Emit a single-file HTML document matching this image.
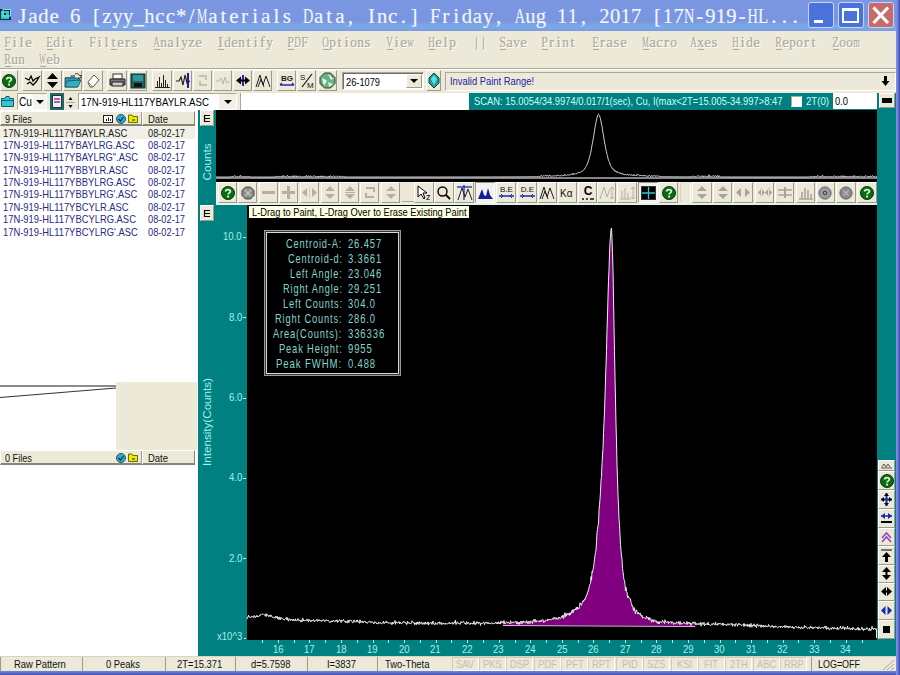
<!DOCTYPE html><html><head><meta charset="utf-8"><style>
*{margin:0;padding:0;box-sizing:border-box}
html,body{width:900px;height:675px;overflow:hidden;background:#ece9d8;font-family:'Liberation Sans',sans-serif;font-size:11px;color:#000;position:relative}
div{position:absolute}
.b{background:#ece9d8;border-style:solid;border-width:1px;border-color:#fff #9d9a8a #9d9a8a #fff}
.bp{background:#f4f3ee;border-style:solid;border-width:1px;border-color:#9d9a8a #fff #fff #9d9a8a}
.sk{border-style:solid;border-width:1px;border-color:#aca899 #fff #fff #aca899}
svg{position:absolute;overflow:visible}
</style></head><body>
<div style="position:absolute;left:0px;top:0px;width:896px;height:31px;background:linear-gradient(#7c98e2 0%,#7a95df 68%,#7aa6e4 80%,#7ba8e6 90%,#7f98e0 100%)"></div>
<div style="position:absolute;left:896px;top:0px;width:4px;height:675px;background:linear-gradient(90deg,#74a2e4 0%,#6878d8 45%,#5a5ccc 75%,#3a3aa0 100%)"></div>
<div style="position:absolute;left:0px;top:671px;width:896px;height:4px;background:linear-gradient(#6c86dc,#5668c8 60%,#4652b0)"></div>
<div style="position:absolute;left:0px;top:31px;width:896px;height:37px;background:#ece9d8"></div>
<div style="position:absolute;left:0px;top:68px;width:896px;height:1px;background:#aca899"></div>
<div style="position:absolute;left:0px;top:69px;width:896px;height:1px;background:#fff"></div>
<svg style="left:0;top:8px" width="13" height="13" viewBox="0 0 13 13"><rect x="0" y="1" width="11" height="11" fill="#0a3040"/><rect x="1" y="3" width="8" height="8" fill="#30c8c8"/><rect x="3" y="1.5" width="7.5" height="6.5" fill="none" stroke="#70e8e8" stroke-width="1"/><rect x="4" y="5" width="2" height="2" fill="#0a3040"/></svg>
<svg style="left:7.00px;top:2.00px" width="803" height="32" font-family="Liberation Serif,serif" font-size="21" font-weight="normal" stroke="#f4f6ff" stroke-width="0.15"><text x="15.29" y="21.00" text-anchor="middle" fill="#f4f6ff">J</text><text x="25.88" y="21.00" text-anchor="middle" fill="#f4f6ff">a</text><text x="31.31" y="21.00" textLength="10.30" lengthAdjust="spacingAndGlyphs" fill="#f4f6ff">d</text><text x="47.05" y="21.00" text-anchor="middle" fill="#f4f6ff">e</text><text x="63.07" y="21.00" textLength="10.30" lengthAdjust="spacingAndGlyphs" fill="#f4f6ff">6</text><text x="89.39" y="21.00" text-anchor="middle" fill="#f4f6ff">[</text><text x="99.97" y="21.00" text-anchor="middle" fill="#f4f6ff">z</text><text x="105.41" y="21.00" textLength="10.30" lengthAdjust="spacingAndGlyphs" fill="#f4f6ff">y</text><text x="115.99" y="21.00" textLength="10.30" lengthAdjust="spacingAndGlyphs" fill="#f4f6ff">y</text><text x="126.58" y="21.00" textLength="10.30" lengthAdjust="spacingAndGlyphs" fill="#f4f6ff">_</text><text x="137.16" y="21.00" textLength="10.30" lengthAdjust="spacingAndGlyphs" fill="#f4f6ff">h</text><text x="152.90" y="21.00" text-anchor="middle" fill="#f4f6ff">c</text><text x="163.48" y="21.00" text-anchor="middle" fill="#f4f6ff">c</text><text x="168.92" y="21.00" textLength="10.30" lengthAdjust="spacingAndGlyphs" fill="#f4f6ff">*</text><text x="184.65" y="21.00" text-anchor="middle" fill="#f4f6ff">/</text><text x="190.09" y="21.00" textLength="10.30" lengthAdjust="spacingAndGlyphs" fill="#f4f6ff">M</text><text x="205.82" y="21.00" text-anchor="middle" fill="#f4f6ff">a</text><text x="216.41" y="21.00" text-anchor="middle" fill="#f4f6ff">t</text><text x="226.99" y="21.00" text-anchor="middle" fill="#f4f6ff">e</text><text x="237.58" y="21.00" text-anchor="middle" fill="#f4f6ff">r</text><text x="248.16" y="21.00" text-anchor="middle" fill="#f4f6ff">i</text><text x="258.75" y="21.00" text-anchor="middle" fill="#f4f6ff">a</text><text x="269.33" y="21.00" text-anchor="middle" fill="#f4f6ff">l</text><text x="279.92" y="21.00" text-anchor="middle" fill="#f4f6ff">s</text><text x="295.94" y="21.00" textLength="10.30" lengthAdjust="spacingAndGlyphs" fill="#f4f6ff">D</text><text x="311.67" y="21.00" text-anchor="middle" fill="#f4f6ff">a</text><text x="322.26" y="21.00" text-anchor="middle" fill="#f4f6ff">t</text><text x="332.84" y="21.00" text-anchor="middle" fill="#f4f6ff">a</text><text x="343.43" y="21.00" text-anchor="middle" fill="#f4f6ff">,</text><text x="364.60" y="21.00" text-anchor="middle" fill="#f4f6ff">I</text><text x="370.03" y="21.00" textLength="10.30" lengthAdjust="spacingAndGlyphs" fill="#f4f6ff">n</text><text x="385.77" y="21.00" text-anchor="middle" fill="#f4f6ff">c</text><text x="396.35" y="21.00" text-anchor="middle" fill="#f4f6ff">.</text><text x="406.94" y="21.00" text-anchor="middle" fill="#f4f6ff">]</text><text x="422.96" y="21.00" textLength="10.30" lengthAdjust="spacingAndGlyphs" fill="#f4f6ff">F</text><text x="438.69" y="21.00" text-anchor="middle" fill="#f4f6ff">r</text><text x="449.28" y="21.00" text-anchor="middle" fill="#f4f6ff">i</text><text x="454.71" y="21.00" textLength="10.30" lengthAdjust="spacingAndGlyphs" fill="#f4f6ff">d</text><text x="470.45" y="21.00" text-anchor="middle" fill="#f4f6ff">a</text><text x="475.88" y="21.00" textLength="10.30" lengthAdjust="spacingAndGlyphs" fill="#f4f6ff">y</text><text x="491.62" y="21.00" text-anchor="middle" fill="#f4f6ff">,</text><text x="507.64" y="21.00" textLength="10.30" lengthAdjust="spacingAndGlyphs" fill="#f4f6ff">A</text><text x="518.22" y="21.00" textLength="10.30" lengthAdjust="spacingAndGlyphs" fill="#f4f6ff">u</text><text x="528.81" y="21.00" textLength="10.30" lengthAdjust="spacingAndGlyphs" fill="#f4f6ff">g</text><text x="549.98" y="21.00" textLength="10.30" lengthAdjust="spacingAndGlyphs" fill="#f4f6ff">1</text><text x="560.56" y="21.00" textLength="10.30" lengthAdjust="spacingAndGlyphs" fill="#f4f6ff">1</text><text x="576.30" y="21.00" text-anchor="middle" fill="#f4f6ff">,</text><text x="592.32" y="21.00" textLength="10.30" lengthAdjust="spacingAndGlyphs" fill="#f4f6ff">2</text><text x="602.90" y="21.00" textLength="10.30" lengthAdjust="spacingAndGlyphs" fill="#f4f6ff">0</text><text x="613.49" y="21.00" textLength="10.30" lengthAdjust="spacingAndGlyphs" fill="#f4f6ff">1</text><text x="624.07" y="21.00" textLength="10.30" lengthAdjust="spacingAndGlyphs" fill="#f4f6ff">7</text><text x="650.39" y="21.00" text-anchor="middle" fill="#f4f6ff">[</text><text x="655.83" y="21.00" textLength="10.30" lengthAdjust="spacingAndGlyphs" fill="#f4f6ff">1</text><text x="666.41" y="21.00" textLength="10.30" lengthAdjust="spacingAndGlyphs" fill="#f4f6ff">7</text><text x="677.00" y="21.00" textLength="10.30" lengthAdjust="spacingAndGlyphs" fill="#f4f6ff">N</text><text x="692.73" y="21.00" text-anchor="middle" fill="#f4f6ff">-</text><text x="698.17" y="21.00" textLength="10.30" lengthAdjust="spacingAndGlyphs" fill="#f4f6ff">9</text><text x="708.75" y="21.00" textLength="10.30" lengthAdjust="spacingAndGlyphs" fill="#f4f6ff">1</text><text x="719.34" y="21.00" textLength="10.30" lengthAdjust="spacingAndGlyphs" fill="#f4f6ff">9</text><text x="735.07" y="21.00" text-anchor="middle" fill="#f4f6ff">-</text><text x="740.51" y="21.00" textLength="10.30" lengthAdjust="spacingAndGlyphs" fill="#f4f6ff">H</text><text x="751.09" y="21.00" textLength="10.30" lengthAdjust="spacingAndGlyphs" fill="#f4f6ff">L</text><text x="766.83" y="21.00" text-anchor="middle" fill="#f4f6ff">.</text><text x="777.41" y="21.00" text-anchor="middle" fill="#f4f6ff">.</text><text x="788.00" y="21.00" text-anchor="middle" fill="#f4f6ff">.</text></svg>
<div style="left:808px;top:2px;width:26px;height:26px;border:1px solid #c8d4f4;border-radius:3px;background:linear-gradient(135deg,#4a72dc,#4a72dc)"></div>
<div style="position:absolute;left:814px;top:20px;width:9px;height:3px;background:#fff"></div>
<div style="left:838px;top:2px;width:26px;height:26px;border:1px solid #c8d4f4;border-radius:3px;background:linear-gradient(135deg,#4a72dc,#4a72dc)"></div>
<div style="position:absolute;left:842px;top:8px;width:17px;height:15px;border:2px solid #fff;border-top-width:3px"></div>
<div style="left:868px;top:2px;width:26px;height:26px;border:1px solid #c8d4f4;border-radius:3px;background:linear-gradient(135deg,#c86a6a,#c86a6a)"></div>
<svg style="left:868px;top:2px" width="26" height="25"><path d="M5.5 5.5 L20 21 M20 5.5 L5.5 21" stroke="#fff" stroke-width="3.2"/></svg>
<svg style="left:-6.00px;top:32.00px" width="48" height="22" font-family="Liberation Serif,serif" font-size="15" font-weight="normal" ><text x="11.18" y="16.00" textLength="6.65" lengthAdjust="spacingAndGlyphs" fill="#ffffff" stroke="#ffffff" stroke-width="0.2">F</text><text x="21.50" y="16.00" text-anchor="middle" fill="#ffffff" stroke="#ffffff" stroke-width="0.2">i</text><text x="28.50" y="16.00" text-anchor="middle" fill="#ffffff" stroke="#ffffff" stroke-width="0.2">l</text><text x="32.17" y="16.00" textLength="6.65" lengthAdjust="spacingAndGlyphs" fill="#ffffff" stroke="#ffffff" stroke-width="0.2">e</text><text x="10.18" y="15.00" textLength="6.65" lengthAdjust="spacingAndGlyphs" fill="#aeaa9a" stroke="#aeaa9a" stroke-width="0.2">F</text><text x="20.50" y="15.00" text-anchor="middle" fill="#aeaa9a" stroke="#aeaa9a" stroke-width="0.2">i</text><text x="27.50" y="15.00" text-anchor="middle" fill="#aeaa9a" stroke="#aeaa9a" stroke-width="0.2">l</text><text x="31.18" y="15.00" textLength="6.65" lengthAdjust="spacingAndGlyphs" fill="#aeaa9a" stroke="#aeaa9a" stroke-width="0.2">e</text></svg>
<div style="position:absolute;left:5px;top:49px;width:6px;height:1px;background:#aca899"></div>
<svg style="left:36.00px;top:32.00px" width="48" height="22" font-family="Liberation Serif,serif" font-size="15" font-weight="normal" ><text x="11.18" y="16.00" textLength="6.65" lengthAdjust="spacingAndGlyphs" fill="#ffffff" stroke="#ffffff" stroke-width="0.2">E</text><text x="18.18" y="16.00" textLength="6.65" lengthAdjust="spacingAndGlyphs" fill="#ffffff" stroke="#ffffff" stroke-width="0.2">d</text><text x="28.50" y="16.00" text-anchor="middle" fill="#ffffff" stroke="#ffffff" stroke-width="0.2">i</text><text x="35.50" y="16.00" text-anchor="middle" fill="#ffffff" stroke="#ffffff" stroke-width="0.2">t</text><text x="10.18" y="15.00" textLength="6.65" lengthAdjust="spacingAndGlyphs" fill="#aeaa9a" stroke="#aeaa9a" stroke-width="0.2">E</text><text x="17.18" y="15.00" textLength="6.65" lengthAdjust="spacingAndGlyphs" fill="#aeaa9a" stroke="#aeaa9a" stroke-width="0.2">d</text><text x="27.50" y="15.00" text-anchor="middle" fill="#aeaa9a" stroke="#aeaa9a" stroke-width="0.2">i</text><text x="34.50" y="15.00" text-anchor="middle" fill="#aeaa9a" stroke="#aeaa9a" stroke-width="0.2">t</text></svg>
<div style="position:absolute;left:47px;top:49px;width:6px;height:1px;background:#aca899"></div>
<svg style="left:78.50px;top:32.00px" width="69" height="22" font-family="Liberation Serif,serif" font-size="15" font-weight="normal" ><text x="11.18" y="16.00" textLength="6.65" lengthAdjust="spacingAndGlyphs" fill="#ffffff" stroke="#ffffff" stroke-width="0.2">F</text><text x="21.50" y="16.00" text-anchor="middle" fill="#ffffff" stroke="#ffffff" stroke-width="0.2">i</text><text x="28.50" y="16.00" text-anchor="middle" fill="#ffffff" stroke="#ffffff" stroke-width="0.2">l</text><text x="35.50" y="16.00" text-anchor="middle" fill="#ffffff" stroke="#ffffff" stroke-width="0.2">t</text><text x="39.17" y="16.00" textLength="6.65" lengthAdjust="spacingAndGlyphs" fill="#ffffff" stroke="#ffffff" stroke-width="0.2">e</text><text x="49.50" y="16.00" text-anchor="middle" fill="#ffffff" stroke="#ffffff" stroke-width="0.2">r</text><text x="56.50" y="16.00" text-anchor="middle" fill="#ffffff" stroke="#ffffff" stroke-width="0.2">s</text><text x="10.18" y="15.00" textLength="6.65" lengthAdjust="spacingAndGlyphs" fill="#aeaa9a" stroke="#aeaa9a" stroke-width="0.2">F</text><text x="20.50" y="15.00" text-anchor="middle" fill="#aeaa9a" stroke="#aeaa9a" stroke-width="0.2">i</text><text x="27.50" y="15.00" text-anchor="middle" fill="#aeaa9a" stroke="#aeaa9a" stroke-width="0.2">l</text><text x="34.50" y="15.00" text-anchor="middle" fill="#aeaa9a" stroke="#aeaa9a" stroke-width="0.2">t</text><text x="38.17" y="15.00" textLength="6.65" lengthAdjust="spacingAndGlyphs" fill="#aeaa9a" stroke="#aeaa9a" stroke-width="0.2">e</text><text x="48.50" y="15.00" text-anchor="middle" fill="#aeaa9a" stroke="#aeaa9a" stroke-width="0.2">r</text><text x="55.50" y="15.00" text-anchor="middle" fill="#aeaa9a" stroke="#aeaa9a" stroke-width="0.2">s</text></svg>
<div style="position:absolute;left:110.5px;top:49px;width:6px;height:1px;background:#aca899"></div>
<svg style="left:143.00px;top:32.00px" width="69" height="22" font-family="Liberation Serif,serif" font-size="15" font-weight="normal" ><text x="11.18" y="16.00" textLength="6.65" lengthAdjust="spacingAndGlyphs" fill="#ffffff" stroke="#ffffff" stroke-width="0.2">A</text><text x="18.18" y="16.00" textLength="6.65" lengthAdjust="spacingAndGlyphs" fill="#ffffff" stroke="#ffffff" stroke-width="0.2">n</text><text x="25.18" y="16.00" textLength="6.65" lengthAdjust="spacingAndGlyphs" fill="#ffffff" stroke="#ffffff" stroke-width="0.2">a</text><text x="35.50" y="16.00" text-anchor="middle" fill="#ffffff" stroke="#ffffff" stroke-width="0.2">l</text><text x="39.17" y="16.00" textLength="6.65" lengthAdjust="spacingAndGlyphs" fill="#ffffff" stroke="#ffffff" stroke-width="0.2">y</text><text x="46.17" y="16.00" textLength="6.65" lengthAdjust="spacingAndGlyphs" fill="#ffffff" stroke="#ffffff" stroke-width="0.2">z</text><text x="53.17" y="16.00" textLength="6.65" lengthAdjust="spacingAndGlyphs" fill="#ffffff" stroke="#ffffff" stroke-width="0.2">e</text><text x="10.18" y="15.00" textLength="6.65" lengthAdjust="spacingAndGlyphs" fill="#aeaa9a" stroke="#aeaa9a" stroke-width="0.2">A</text><text x="17.18" y="15.00" textLength="6.65" lengthAdjust="spacingAndGlyphs" fill="#aeaa9a" stroke="#aeaa9a" stroke-width="0.2">n</text><text x="24.18" y="15.00" textLength="6.65" lengthAdjust="spacingAndGlyphs" fill="#aeaa9a" stroke="#aeaa9a" stroke-width="0.2">a</text><text x="34.50" y="15.00" text-anchor="middle" fill="#aeaa9a" stroke="#aeaa9a" stroke-width="0.2">l</text><text x="38.17" y="15.00" textLength="6.65" lengthAdjust="spacingAndGlyphs" fill="#aeaa9a" stroke="#aeaa9a" stroke-width="0.2">y</text><text x="45.17" y="15.00" textLength="6.65" lengthAdjust="spacingAndGlyphs" fill="#aeaa9a" stroke="#aeaa9a" stroke-width="0.2">z</text><text x="52.17" y="15.00" textLength="6.65" lengthAdjust="spacingAndGlyphs" fill="#aeaa9a" stroke="#aeaa9a" stroke-width="0.2">e</text></svg>
<div style="position:absolute;left:154px;top:49px;width:6px;height:1px;background:#aca899"></div>
<svg style="left:207.00px;top:32.00px" width="76" height="22" font-family="Liberation Serif,serif" font-size="15" font-weight="normal" ><text x="14.50" y="16.00" text-anchor="middle" fill="#ffffff" stroke="#ffffff" stroke-width="0.2">I</text><text x="18.18" y="16.00" textLength="6.65" lengthAdjust="spacingAndGlyphs" fill="#ffffff" stroke="#ffffff" stroke-width="0.2">d</text><text x="25.18" y="16.00" textLength="6.65" lengthAdjust="spacingAndGlyphs" fill="#ffffff" stroke="#ffffff" stroke-width="0.2">e</text><text x="32.17" y="16.00" textLength="6.65" lengthAdjust="spacingAndGlyphs" fill="#ffffff" stroke="#ffffff" stroke-width="0.2">n</text><text x="42.50" y="16.00" text-anchor="middle" fill="#ffffff" stroke="#ffffff" stroke-width="0.2">t</text><text x="49.50" y="16.00" text-anchor="middle" fill="#ffffff" stroke="#ffffff" stroke-width="0.2">i</text><text x="56.50" y="16.00" text-anchor="middle" fill="#ffffff" stroke="#ffffff" stroke-width="0.2">f</text><text x="60.17" y="16.00" textLength="6.65" lengthAdjust="spacingAndGlyphs" fill="#ffffff" stroke="#ffffff" stroke-width="0.2">y</text><text x="13.50" y="15.00" text-anchor="middle" fill="#aeaa9a" stroke="#aeaa9a" stroke-width="0.2">I</text><text x="17.18" y="15.00" textLength="6.65" lengthAdjust="spacingAndGlyphs" fill="#aeaa9a" stroke="#aeaa9a" stroke-width="0.2">d</text><text x="24.18" y="15.00" textLength="6.65" lengthAdjust="spacingAndGlyphs" fill="#aeaa9a" stroke="#aeaa9a" stroke-width="0.2">e</text><text x="31.18" y="15.00" textLength="6.65" lengthAdjust="spacingAndGlyphs" fill="#aeaa9a" stroke="#aeaa9a" stroke-width="0.2">n</text><text x="41.50" y="15.00" text-anchor="middle" fill="#aeaa9a" stroke="#aeaa9a" stroke-width="0.2">t</text><text x="48.50" y="15.00" text-anchor="middle" fill="#aeaa9a" stroke="#aeaa9a" stroke-width="0.2">i</text><text x="55.50" y="15.00" text-anchor="middle" fill="#aeaa9a" stroke="#aeaa9a" stroke-width="0.2">f</text><text x="59.17" y="15.00" textLength="6.65" lengthAdjust="spacingAndGlyphs" fill="#aeaa9a" stroke="#aeaa9a" stroke-width="0.2">y</text></svg>
<div style="position:absolute;left:218px;top:49px;width:6px;height:1px;background:#aca899"></div>
<svg style="left:277.00px;top:32.00px" width="41" height="22" font-family="Liberation Serif,serif" font-size="15" font-weight="normal" ><text x="11.18" y="16.00" textLength="6.65" lengthAdjust="spacingAndGlyphs" fill="#ffffff" stroke="#ffffff" stroke-width="0.2">P</text><text x="18.18" y="16.00" textLength="6.65" lengthAdjust="spacingAndGlyphs" fill="#ffffff" stroke="#ffffff" stroke-width="0.2">D</text><text x="25.18" y="16.00" textLength="6.65" lengthAdjust="spacingAndGlyphs" fill="#ffffff" stroke="#ffffff" stroke-width="0.2">F</text><text x="10.18" y="15.00" textLength="6.65" lengthAdjust="spacingAndGlyphs" fill="#aeaa9a" stroke="#aeaa9a" stroke-width="0.2">P</text><text x="17.18" y="15.00" textLength="6.65" lengthAdjust="spacingAndGlyphs" fill="#aeaa9a" stroke="#aeaa9a" stroke-width="0.2">D</text><text x="24.18" y="15.00" textLength="6.65" lengthAdjust="spacingAndGlyphs" fill="#aeaa9a" stroke="#aeaa9a" stroke-width="0.2">F</text></svg>
<div style="position:absolute;left:288px;top:49px;width:6px;height:1px;background:#aca899"></div>
<svg style="left:312.00px;top:32.00px" width="69" height="22" font-family="Liberation Serif,serif" font-size="15" font-weight="normal" ><text x="11.18" y="16.00" textLength="6.65" lengthAdjust="spacingAndGlyphs" fill="#ffffff" stroke="#ffffff" stroke-width="0.2">O</text><text x="18.18" y="16.00" textLength="6.65" lengthAdjust="spacingAndGlyphs" fill="#ffffff" stroke="#ffffff" stroke-width="0.2">p</text><text x="28.50" y="16.00" text-anchor="middle" fill="#ffffff" stroke="#ffffff" stroke-width="0.2">t</text><text x="35.50" y="16.00" text-anchor="middle" fill="#ffffff" stroke="#ffffff" stroke-width="0.2">i</text><text x="39.17" y="16.00" textLength="6.65" lengthAdjust="spacingAndGlyphs" fill="#ffffff" stroke="#ffffff" stroke-width="0.2">o</text><text x="46.17" y="16.00" textLength="6.65" lengthAdjust="spacingAndGlyphs" fill="#ffffff" stroke="#ffffff" stroke-width="0.2">n</text><text x="56.50" y="16.00" text-anchor="middle" fill="#ffffff" stroke="#ffffff" stroke-width="0.2">s</text><text x="10.18" y="15.00" textLength="6.65" lengthAdjust="spacingAndGlyphs" fill="#aeaa9a" stroke="#aeaa9a" stroke-width="0.2">O</text><text x="17.18" y="15.00" textLength="6.65" lengthAdjust="spacingAndGlyphs" fill="#aeaa9a" stroke="#aeaa9a" stroke-width="0.2">p</text><text x="27.50" y="15.00" text-anchor="middle" fill="#aeaa9a" stroke="#aeaa9a" stroke-width="0.2">t</text><text x="34.50" y="15.00" text-anchor="middle" fill="#aeaa9a" stroke="#aeaa9a" stroke-width="0.2">i</text><text x="38.17" y="15.00" textLength="6.65" lengthAdjust="spacingAndGlyphs" fill="#aeaa9a" stroke="#aeaa9a" stroke-width="0.2">o</text><text x="45.17" y="15.00" textLength="6.65" lengthAdjust="spacingAndGlyphs" fill="#aeaa9a" stroke="#aeaa9a" stroke-width="0.2">n</text><text x="55.50" y="15.00" text-anchor="middle" fill="#aeaa9a" stroke="#aeaa9a" stroke-width="0.2">s</text></svg>
<div style="position:absolute;left:323px;top:49px;width:6px;height:1px;background:#aca899"></div>
<svg style="left:376.00px;top:32.00px" width="48" height="22" font-family="Liberation Serif,serif" font-size="15" font-weight="normal" ><text x="11.18" y="16.00" textLength="6.65" lengthAdjust="spacingAndGlyphs" fill="#ffffff" stroke="#ffffff" stroke-width="0.2">V</text><text x="21.50" y="16.00" text-anchor="middle" fill="#ffffff" stroke="#ffffff" stroke-width="0.2">i</text><text x="25.18" y="16.00" textLength="6.65" lengthAdjust="spacingAndGlyphs" fill="#ffffff" stroke="#ffffff" stroke-width="0.2">e</text><text x="32.17" y="16.00" textLength="6.65" lengthAdjust="spacingAndGlyphs" fill="#ffffff" stroke="#ffffff" stroke-width="0.2">w</text><text x="10.18" y="15.00" textLength="6.65" lengthAdjust="spacingAndGlyphs" fill="#aeaa9a" stroke="#aeaa9a" stroke-width="0.2">V</text><text x="20.50" y="15.00" text-anchor="middle" fill="#aeaa9a" stroke="#aeaa9a" stroke-width="0.2">i</text><text x="24.18" y="15.00" textLength="6.65" lengthAdjust="spacingAndGlyphs" fill="#aeaa9a" stroke="#aeaa9a" stroke-width="0.2">e</text><text x="31.18" y="15.00" textLength="6.65" lengthAdjust="spacingAndGlyphs" fill="#aeaa9a" stroke="#aeaa9a" stroke-width="0.2">w</text></svg>
<div style="position:absolute;left:387px;top:49px;width:6px;height:1px;background:#aca899"></div>
<svg style="left:418.00px;top:32.00px" width="48" height="22" font-family="Liberation Serif,serif" font-size="15" font-weight="normal" ><text x="11.18" y="16.00" textLength="6.65" lengthAdjust="spacingAndGlyphs" fill="#ffffff" stroke="#ffffff" stroke-width="0.2">H</text><text x="18.18" y="16.00" textLength="6.65" lengthAdjust="spacingAndGlyphs" fill="#ffffff" stroke="#ffffff" stroke-width="0.2">e</text><text x="28.50" y="16.00" text-anchor="middle" fill="#ffffff" stroke="#ffffff" stroke-width="0.2">l</text><text x="32.17" y="16.00" textLength="6.65" lengthAdjust="spacingAndGlyphs" fill="#ffffff" stroke="#ffffff" stroke-width="0.2">p</text><text x="10.18" y="15.00" textLength="6.65" lengthAdjust="spacingAndGlyphs" fill="#aeaa9a" stroke="#aeaa9a" stroke-width="0.2">H</text><text x="17.18" y="15.00" textLength="6.65" lengthAdjust="spacingAndGlyphs" fill="#aeaa9a" stroke="#aeaa9a" stroke-width="0.2">e</text><text x="27.50" y="15.00" text-anchor="middle" fill="#aeaa9a" stroke="#aeaa9a" stroke-width="0.2">l</text><text x="31.18" y="15.00" textLength="6.65" lengthAdjust="spacingAndGlyphs" fill="#aeaa9a" stroke="#aeaa9a" stroke-width="0.2">p</text></svg>
<div style="position:absolute;left:429px;top:49px;width:6px;height:1px;background:#aca899"></div>
<svg style="left:463.00px;top:32.00px" width="34" height="22" font-family="Liberation Serif,serif" font-size="15" font-weight="normal" ><text x="14.50" y="16.00" text-anchor="middle" fill="#ffffff" stroke="#ffffff" stroke-width="0.2">|</text><text x="21.50" y="16.00" text-anchor="middle" fill="#ffffff" stroke="#ffffff" stroke-width="0.2">|</text><text x="13.50" y="15.00" text-anchor="middle" fill="#aeaa9a" stroke="#aeaa9a" stroke-width="0.2">|</text><text x="20.50" y="15.00" text-anchor="middle" fill="#aeaa9a" stroke="#aeaa9a" stroke-width="0.2">|</text></svg>
<svg style="left:489.00px;top:32.00px" width="48" height="22" font-family="Liberation Serif,serif" font-size="15" font-weight="normal" ><text x="11.18" y="16.00" textLength="6.65" lengthAdjust="spacingAndGlyphs" fill="#ffffff" stroke="#ffffff" stroke-width="0.2">S</text><text x="18.18" y="16.00" textLength="6.65" lengthAdjust="spacingAndGlyphs" fill="#ffffff" stroke="#ffffff" stroke-width="0.2">a</text><text x="25.18" y="16.00" textLength="6.65" lengthAdjust="spacingAndGlyphs" fill="#ffffff" stroke="#ffffff" stroke-width="0.2">v</text><text x="32.17" y="16.00" textLength="6.65" lengthAdjust="spacingAndGlyphs" fill="#ffffff" stroke="#ffffff" stroke-width="0.2">e</text><text x="10.18" y="15.00" textLength="6.65" lengthAdjust="spacingAndGlyphs" fill="#aeaa9a" stroke="#aeaa9a" stroke-width="0.2">S</text><text x="17.18" y="15.00" textLength="6.65" lengthAdjust="spacingAndGlyphs" fill="#aeaa9a" stroke="#aeaa9a" stroke-width="0.2">a</text><text x="24.18" y="15.00" textLength="6.65" lengthAdjust="spacingAndGlyphs" fill="#aeaa9a" stroke="#aeaa9a" stroke-width="0.2">v</text><text x="31.18" y="15.00" textLength="6.65" lengthAdjust="spacingAndGlyphs" fill="#aeaa9a" stroke="#aeaa9a" stroke-width="0.2">e</text></svg>
<div style="position:absolute;left:500px;top:49px;width:6px;height:1px;background:#aca899"></div>
<svg style="left:531.00px;top:32.00px" width="55" height="22" font-family="Liberation Serif,serif" font-size="15" font-weight="normal" ><text x="11.18" y="16.00" textLength="6.65" lengthAdjust="spacingAndGlyphs" fill="#ffffff" stroke="#ffffff" stroke-width="0.2">P</text><text x="21.50" y="16.00" text-anchor="middle" fill="#ffffff" stroke="#ffffff" stroke-width="0.2">r</text><text x="28.50" y="16.00" text-anchor="middle" fill="#ffffff" stroke="#ffffff" stroke-width="0.2">i</text><text x="32.17" y="16.00" textLength="6.65" lengthAdjust="spacingAndGlyphs" fill="#ffffff" stroke="#ffffff" stroke-width="0.2">n</text><text x="42.50" y="16.00" text-anchor="middle" fill="#ffffff" stroke="#ffffff" stroke-width="0.2">t</text><text x="10.18" y="15.00" textLength="6.65" lengthAdjust="spacingAndGlyphs" fill="#aeaa9a" stroke="#aeaa9a" stroke-width="0.2">P</text><text x="20.50" y="15.00" text-anchor="middle" fill="#aeaa9a" stroke="#aeaa9a" stroke-width="0.2">r</text><text x="27.50" y="15.00" text-anchor="middle" fill="#aeaa9a" stroke="#aeaa9a" stroke-width="0.2">i</text><text x="31.18" y="15.00" textLength="6.65" lengthAdjust="spacingAndGlyphs" fill="#aeaa9a" stroke="#aeaa9a" stroke-width="0.2">n</text><text x="41.50" y="15.00" text-anchor="middle" fill="#aeaa9a" stroke="#aeaa9a" stroke-width="0.2">t</text></svg>
<div style="position:absolute;left:542px;top:49px;width:6px;height:1px;background:#aca899"></div>
<svg style="left:581.50px;top:32.00px" width="55" height="22" font-family="Liberation Serif,serif" font-size="15" font-weight="normal" ><text x="11.18" y="16.00" textLength="6.65" lengthAdjust="spacingAndGlyphs" fill="#ffffff" stroke="#ffffff" stroke-width="0.2">E</text><text x="21.50" y="16.00" text-anchor="middle" fill="#ffffff" stroke="#ffffff" stroke-width="0.2">r</text><text x="25.18" y="16.00" textLength="6.65" lengthAdjust="spacingAndGlyphs" fill="#ffffff" stroke="#ffffff" stroke-width="0.2">a</text><text x="35.50" y="16.00" text-anchor="middle" fill="#ffffff" stroke="#ffffff" stroke-width="0.2">s</text><text x="39.17" y="16.00" textLength="6.65" lengthAdjust="spacingAndGlyphs" fill="#ffffff" stroke="#ffffff" stroke-width="0.2">e</text><text x="10.18" y="15.00" textLength="6.65" lengthAdjust="spacingAndGlyphs" fill="#aeaa9a" stroke="#aeaa9a" stroke-width="0.2">E</text><text x="20.50" y="15.00" text-anchor="middle" fill="#aeaa9a" stroke="#aeaa9a" stroke-width="0.2">r</text><text x="24.18" y="15.00" textLength="6.65" lengthAdjust="spacingAndGlyphs" fill="#aeaa9a" stroke="#aeaa9a" stroke-width="0.2">a</text><text x="34.50" y="15.00" text-anchor="middle" fill="#aeaa9a" stroke="#aeaa9a" stroke-width="0.2">s</text><text x="38.17" y="15.00" textLength="6.65" lengthAdjust="spacingAndGlyphs" fill="#aeaa9a" stroke="#aeaa9a" stroke-width="0.2">e</text></svg>
<div style="position:absolute;left:592.5px;top:49px;width:6px;height:1px;background:#aca899"></div>
<svg style="left:631.50px;top:32.00px" width="55" height="22" font-family="Liberation Serif,serif" font-size="15" font-weight="normal" ><text x="11.18" y="16.00" textLength="6.65" lengthAdjust="spacingAndGlyphs" fill="#ffffff" stroke="#ffffff" stroke-width="0.2">M</text><text x="18.18" y="16.00" textLength="6.65" lengthAdjust="spacingAndGlyphs" fill="#ffffff" stroke="#ffffff" stroke-width="0.2">a</text><text x="25.18" y="16.00" textLength="6.65" lengthAdjust="spacingAndGlyphs" fill="#ffffff" stroke="#ffffff" stroke-width="0.2">c</text><text x="35.50" y="16.00" text-anchor="middle" fill="#ffffff" stroke="#ffffff" stroke-width="0.2">r</text><text x="39.17" y="16.00" textLength="6.65" lengthAdjust="spacingAndGlyphs" fill="#ffffff" stroke="#ffffff" stroke-width="0.2">o</text><text x="10.18" y="15.00" textLength="6.65" lengthAdjust="spacingAndGlyphs" fill="#aeaa9a" stroke="#aeaa9a" stroke-width="0.2">M</text><text x="17.18" y="15.00" textLength="6.65" lengthAdjust="spacingAndGlyphs" fill="#aeaa9a" stroke="#aeaa9a" stroke-width="0.2">a</text><text x="24.18" y="15.00" textLength="6.65" lengthAdjust="spacingAndGlyphs" fill="#aeaa9a" stroke="#aeaa9a" stroke-width="0.2">c</text><text x="34.50" y="15.00" text-anchor="middle" fill="#aeaa9a" stroke="#aeaa9a" stroke-width="0.2">r</text><text x="38.17" y="15.00" textLength="6.65" lengthAdjust="spacingAndGlyphs" fill="#aeaa9a" stroke="#aeaa9a" stroke-width="0.2">o</text></svg>
<div style="position:absolute;left:642.5px;top:49px;width:6px;height:1px;background:#aca899"></div>
<svg style="left:680.00px;top:32.00px" width="48" height="22" font-family="Liberation Serif,serif" font-size="15" font-weight="normal" ><text x="11.18" y="16.00" textLength="6.65" lengthAdjust="spacingAndGlyphs" fill="#ffffff" stroke="#ffffff" stroke-width="0.2">A</text><text x="18.18" y="16.00" textLength="6.65" lengthAdjust="spacingAndGlyphs" fill="#ffffff" stroke="#ffffff" stroke-width="0.2">x</text><text x="25.18" y="16.00" textLength="6.65" lengthAdjust="spacingAndGlyphs" fill="#ffffff" stroke="#ffffff" stroke-width="0.2">e</text><text x="35.50" y="16.00" text-anchor="middle" fill="#ffffff" stroke="#ffffff" stroke-width="0.2">s</text><text x="10.18" y="15.00" textLength="6.65" lengthAdjust="spacingAndGlyphs" fill="#aeaa9a" stroke="#aeaa9a" stroke-width="0.2">A</text><text x="17.18" y="15.00" textLength="6.65" lengthAdjust="spacingAndGlyphs" fill="#aeaa9a" stroke="#aeaa9a" stroke-width="0.2">x</text><text x="24.18" y="15.00" textLength="6.65" lengthAdjust="spacingAndGlyphs" fill="#aeaa9a" stroke="#aeaa9a" stroke-width="0.2">e</text><text x="34.50" y="15.00" text-anchor="middle" fill="#aeaa9a" stroke="#aeaa9a" stroke-width="0.2">s</text></svg>
<div style="position:absolute;left:698px;top:49px;width:6px;height:1px;background:#aca899"></div>
<svg style="left:722.00px;top:32.00px" width="48" height="22" font-family="Liberation Serif,serif" font-size="15" font-weight="normal" ><text x="11.18" y="16.00" textLength="6.65" lengthAdjust="spacingAndGlyphs" fill="#ffffff" stroke="#ffffff" stroke-width="0.2">H</text><text x="21.50" y="16.00" text-anchor="middle" fill="#ffffff" stroke="#ffffff" stroke-width="0.2">i</text><text x="25.18" y="16.00" textLength="6.65" lengthAdjust="spacingAndGlyphs" fill="#ffffff" stroke="#ffffff" stroke-width="0.2">d</text><text x="32.17" y="16.00" textLength="6.65" lengthAdjust="spacingAndGlyphs" fill="#ffffff" stroke="#ffffff" stroke-width="0.2">e</text><text x="10.18" y="15.00" textLength="6.65" lengthAdjust="spacingAndGlyphs" fill="#aeaa9a" stroke="#aeaa9a" stroke-width="0.2">H</text><text x="20.50" y="15.00" text-anchor="middle" fill="#aeaa9a" stroke="#aeaa9a" stroke-width="0.2">i</text><text x="24.18" y="15.00" textLength="6.65" lengthAdjust="spacingAndGlyphs" fill="#aeaa9a" stroke="#aeaa9a" stroke-width="0.2">d</text><text x="31.18" y="15.00" textLength="6.65" lengthAdjust="spacingAndGlyphs" fill="#aeaa9a" stroke="#aeaa9a" stroke-width="0.2">e</text></svg>
<div style="position:absolute;left:733px;top:49px;width:6px;height:1px;background:#aca899"></div>
<svg style="left:765.00px;top:32.00px" width="62" height="22" font-family="Liberation Serif,serif" font-size="15" font-weight="normal" ><text x="11.18" y="16.00" textLength="6.65" lengthAdjust="spacingAndGlyphs" fill="#ffffff" stroke="#ffffff" stroke-width="0.2">R</text><text x="18.18" y="16.00" textLength="6.65" lengthAdjust="spacingAndGlyphs" fill="#ffffff" stroke="#ffffff" stroke-width="0.2">e</text><text x="25.18" y="16.00" textLength="6.65" lengthAdjust="spacingAndGlyphs" fill="#ffffff" stroke="#ffffff" stroke-width="0.2">p</text><text x="32.17" y="16.00" textLength="6.65" lengthAdjust="spacingAndGlyphs" fill="#ffffff" stroke="#ffffff" stroke-width="0.2">o</text><text x="42.50" y="16.00" text-anchor="middle" fill="#ffffff" stroke="#ffffff" stroke-width="0.2">r</text><text x="49.50" y="16.00" text-anchor="middle" fill="#ffffff" stroke="#ffffff" stroke-width="0.2">t</text><text x="10.18" y="15.00" textLength="6.65" lengthAdjust="spacingAndGlyphs" fill="#aeaa9a" stroke="#aeaa9a" stroke-width="0.2">R</text><text x="17.18" y="15.00" textLength="6.65" lengthAdjust="spacingAndGlyphs" fill="#aeaa9a" stroke="#aeaa9a" stroke-width="0.2">e</text><text x="24.18" y="15.00" textLength="6.65" lengthAdjust="spacingAndGlyphs" fill="#aeaa9a" stroke="#aeaa9a" stroke-width="0.2">p</text><text x="31.18" y="15.00" textLength="6.65" lengthAdjust="spacingAndGlyphs" fill="#aeaa9a" stroke="#aeaa9a" stroke-width="0.2">o</text><text x="41.50" y="15.00" text-anchor="middle" fill="#aeaa9a" stroke="#aeaa9a" stroke-width="0.2">r</text><text x="48.50" y="15.00" text-anchor="middle" fill="#aeaa9a" stroke="#aeaa9a" stroke-width="0.2">t</text></svg>
<div style="position:absolute;left:776px;top:49px;width:6px;height:1px;background:#aca899"></div>
<svg style="left:822.00px;top:32.00px" width="48" height="22" font-family="Liberation Serif,serif" font-size="15" font-weight="normal" ><text x="11.18" y="16.00" textLength="6.65" lengthAdjust="spacingAndGlyphs" fill="#ffffff" stroke="#ffffff" stroke-width="0.2">Z</text><text x="18.18" y="16.00" textLength="6.65" lengthAdjust="spacingAndGlyphs" fill="#ffffff" stroke="#ffffff" stroke-width="0.2">o</text><text x="25.18" y="16.00" textLength="6.65" lengthAdjust="spacingAndGlyphs" fill="#ffffff" stroke="#ffffff" stroke-width="0.2">o</text><text x="32.17" y="16.00" textLength="6.65" lengthAdjust="spacingAndGlyphs" fill="#ffffff" stroke="#ffffff" stroke-width="0.2">m</text><text x="10.18" y="15.00" textLength="6.65" lengthAdjust="spacingAndGlyphs" fill="#aeaa9a" stroke="#aeaa9a" stroke-width="0.2">Z</text><text x="17.18" y="15.00" textLength="6.65" lengthAdjust="spacingAndGlyphs" fill="#aeaa9a" stroke="#aeaa9a" stroke-width="0.2">o</text><text x="24.18" y="15.00" textLength="6.65" lengthAdjust="spacingAndGlyphs" fill="#aeaa9a" stroke="#aeaa9a" stroke-width="0.2">o</text><text x="31.18" y="15.00" textLength="6.65" lengthAdjust="spacingAndGlyphs" fill="#aeaa9a" stroke="#aeaa9a" stroke-width="0.2">m</text></svg>
<div style="position:absolute;left:833px;top:49px;width:6px;height:1px;background:#aca899"></div>
<svg style="left:-6.00px;top:49.00px" width="41" height="22" font-family="Liberation Serif,serif" font-size="15" font-weight="normal" ><text x="11.18" y="16.00" textLength="6.65" lengthAdjust="spacingAndGlyphs" fill="#ffffff" stroke="#ffffff" stroke-width="0.2">R</text><text x="18.18" y="16.00" textLength="6.65" lengthAdjust="spacingAndGlyphs" fill="#ffffff" stroke="#ffffff" stroke-width="0.2">u</text><text x="25.18" y="16.00" textLength="6.65" lengthAdjust="spacingAndGlyphs" fill="#ffffff" stroke="#ffffff" stroke-width="0.2">n</text><text x="10.18" y="15.00" textLength="6.65" lengthAdjust="spacingAndGlyphs" fill="#aeaa9a" stroke="#aeaa9a" stroke-width="0.2">R</text><text x="17.18" y="15.00" textLength="6.65" lengthAdjust="spacingAndGlyphs" fill="#aeaa9a" stroke="#aeaa9a" stroke-width="0.2">u</text><text x="24.18" y="15.00" textLength="6.65" lengthAdjust="spacingAndGlyphs" fill="#aeaa9a" stroke="#aeaa9a" stroke-width="0.2">n</text></svg>
<div style="position:absolute;left:5px;top:66px;width:6px;height:1px;background:#aca899"></div>
<svg style="left:29.00px;top:49.00px" width="41" height="22" font-family="Liberation Serif,serif" font-size="15" font-weight="normal" ><text x="11.18" y="16.00" textLength="6.65" lengthAdjust="spacingAndGlyphs" fill="#ffffff" stroke="#ffffff" stroke-width="0.2">W</text><text x="18.18" y="16.00" textLength="6.65" lengthAdjust="spacingAndGlyphs" fill="#ffffff" stroke="#ffffff" stroke-width="0.2">e</text><text x="25.18" y="16.00" textLength="6.65" lengthAdjust="spacingAndGlyphs" fill="#ffffff" stroke="#ffffff" stroke-width="0.2">b</text><text x="10.18" y="15.00" textLength="6.65" lengthAdjust="spacingAndGlyphs" fill="#aeaa9a" stroke="#aeaa9a" stroke-width="0.2">W</text><text x="17.18" y="15.00" textLength="6.65" lengthAdjust="spacingAndGlyphs" fill="#aeaa9a" stroke="#aeaa9a" stroke-width="0.2">e</text><text x="24.18" y="15.00" textLength="6.65" lengthAdjust="spacingAndGlyphs" fill="#aeaa9a" stroke="#aeaa9a" stroke-width="0.2">b</text></svg>
<div style="position:absolute;left:40px;top:66px;width:6px;height:1px;background:#aca899"></div>
<div class="b" style="position:absolute;left:0px;top:70px;width:18px;height:21px;"></div>
<div class="b" style="position:absolute;left:22px;top:70px;width:20px;height:21px;"></div>
<div class="b" style="position:absolute;left:43px;top:70px;width:19px;height:21px;"></div>
<div class="b" style="position:absolute;left:63px;top:70px;width:19px;height:21px;"></div>
<div class="b" style="position:absolute;left:83px;top:70px;width:20px;height:21px;"></div>
<div class="b" style="position:absolute;left:107px;top:70px;width:20px;height:21px;"></div>
<div class="b" style="position:absolute;left:128px;top:70px;width:19px;height:21px;"></div>
<div class="b" style="position:absolute;left:152px;top:70px;width:20px;height:21px;"></div>
<div class="b" style="position:absolute;left:173px;top:70px;width:19px;height:21px;"></div>
<div class="b" style="position:absolute;left:193px;top:70px;width:19px;height:21px;"></div>
<div class="b" style="position:absolute;left:213px;top:70px;width:19px;height:21px;"></div>
<div class="b" style="position:absolute;left:233px;top:70px;width:19px;height:21px;"></div>
<div class="b" style="position:absolute;left:253px;top:70px;width:19px;height:21px;"></div>
<div class="b" style="position:absolute;left:277px;top:70px;width:19px;height:21px;"></div>
<div class="b" style="position:absolute;left:297px;top:70px;width:19px;height:21px;"></div>
<div class="b" style="position:absolute;left:318px;top:70px;width:19px;height:21px;"></div>
<div class="b" style="position:absolute;left:426px;top:70px;width:15px;height:21px;"></div>
<svg style="left:2px;top:74px" width="14" height="14" viewBox="0 0 16 16"><circle cx="8" cy="8" r="7.5" fill="#0c6a14" stroke="#063008" stroke-width="1"/><path d="M5.3 6.2 C5.3 3.6 10.7 3.6 10.7 6.2 C10.7 7.8 8.1 8 8.1 9.8" stroke="#d8f8d0" stroke-width="2" fill="none"/><rect x="7" y="11" width="2.2" height="2.2" fill="#d8f8d0"/></svg>
<svg style="left:24px;top:73px" width="16" height="14" viewBox="0 0 16 14"><path d="M1 5 L5 7 L7 3 L9 8 L11 6 L15 4 L12 9 L9 12 L6 9 L3 11" stroke="#000" stroke-width="1.3" fill="none"/></svg>
<svg style="left:45px;top:72px" width="15" height="17" viewBox="0 0 15 17"><path d="M7.5 1 L13 7 L2 7 Z M2 10 L13 10 L7.5 16 Z" fill="#000"/></svg>
<svg style="left:64px;top:73px" width="18" height="15" viewBox="0 0 18 15"><path d="M1 4 L6 4 L7 2 L11 2 L11 5 L1 5 Z" fill="#5a8aa0"/><path d="M1 5 L13 5 L16 6 L13 14 L1 14 Z" fill="#3a9ab0" stroke="#1a4a5a" stroke-width="0.8"/><path d="M3 8 L17 7 L14 14 L1 14 Z" fill="#2fb0c0" stroke="#1a4a5a" stroke-width="0.8"/><path d="M11 1 C13 0 15 1 16 3 L17 2 L17 5 L14 5" stroke="#333" fill="none" stroke-width="1"/></svg>
<svg style="left:85px;top:73px" width="16" height="15" viewBox="0 0 16 15"><path d="M3 9 L9 2 L14 7 L8 14 L5 14 Z" fill="#fff" stroke="#555" stroke-width="1"/><path d="M3 9 L8 14" stroke="#888"/></svg>
<svg style="left:109px;top:73px" width="17" height="15" viewBox="0 0 17 15"><rect x="4" y="1" width="9" height="5" fill="#fff" stroke="#333"/><path d="M1 6 L16 6 L16 12 L1 12 Z" fill="#777" stroke="#222"/><rect x="3" y="9" width="11" height="4" fill="#ccc" stroke="#222"/></svg>
<svg style="left:130px;top:73px" width="16" height="15" viewBox="0 0 16 15"><rect x="1" y="1" width="14" height="14" fill="#1f5f5f" stroke="#0a2a2a"/><rect x="3" y="2" width="10" height="6" fill="#2a9a9a"/><rect x="4" y="10" width="8" height="4" fill="#111"/></svg>
<svg style="left:154px;top:73px" width="17" height="15" viewBox="0 0 17 15"><path d="M1 14.5 L16 14.5 M3.5 14 L3.5 8 M5.5 14 L5.5 4 M7.5 14 L7.5 10 M9.5 14 L9.5 2 M11.5 14 L11.5 7 M13.5 14 L13.5 11" stroke="#222" stroke-width="1"/></svg>
<svg style="left:175px;top:72px" width="16" height="17" viewBox="0 0 16 17"><path d="M1 9 L4 9 L6 5 L8 13 L10 3 L12 11 L15 9" stroke="#222" stroke-width="1.2" fill="none"/><path d="M13 1 L13 16" stroke="#1a1aa0" stroke-width="2"/></svg>
<svg style="left:195px;top:73px" width="16" height="15" viewBox="0 0 16 15"><path d="M4 3 L11 3 L11 7 M12 12 L5 12 L5 8" stroke="#b8b5a8" stroke-width="1.5" fill="none"/></svg>
<svg style="left:215px;top:73px" width="16" height="15" viewBox="0 0 16 15"><path d="M1 8 L4 8 L6 5 L8 11 L10 4 L12 10 L15 8" stroke="#b8b5a8" stroke-width="1" fill="none"/></svg>
<svg style="left:235px;top:72px" width="16" height="17" viewBox="0 0 16 17"><path d="M8 3 L8 14" stroke="#1a2ab0" stroke-width="2"/><path d="M1 8.5 L6 4.5 L6 12.5 Z M15 8.5 L10 4.5 L10 12.5 Z" fill="#000"/><path d="M6 8.5 L10 8.5" stroke="#000" stroke-width="2"/></svg>
<svg style="left:255px;top:73px" width="16" height="15" viewBox="0 0 16 15"><path d="M1 14 L5 2 L8 12 L11 3 L15 14 M3 14 L6 6 L9 14" stroke="#222" stroke-width="1" fill="none"/></svg>
<svg style="left:279px;top:73px" width="16" height="15" viewBox="0 0 16 15"><text x="8" y="8" font-family="Liberation Sans" font-size="8" font-weight="bold" text-anchor="middle" fill="#222">BG</text><path d="M1 12 L15 12 M1 12 L3 10 M15 12 L13 10" stroke="#1a2ab0" stroke-width="1.3" fill="none"/></svg>
<svg style="left:299px;top:72px" width="16" height="17" viewBox="0 0 16 17"><text x="1" y="8" font-family="Liberation Sans" font-size="8" fill="#111">S</text><text x="8" y="16" font-family="Liberation Sans" font-size="8" fill="#111">M</text><path d="M3 15 L13 2" stroke="#111" stroke-width="1.2"/></svg>
<svg style="left:319px;top:72px" width="17" height="17" viewBox="0 0 17 17"><path d="M5.5 1 L11.5 1 L16 5.5 L16 11.5 L11.5 16 L5.5 16 L1 11.5 L1 5.5 Z" fill="#60b880" stroke="#333"/><path d="M3 6 L8 8.5 L5 14 Z" fill="#f0f0f0"/><path d="M9 2 L12 8 L15 6 Z" fill="#f0f0f0"/><path d="M2 11 L5 14 L2 14 Z M12 2 L15 5 L13 6 Z" fill="#8a5a40"/><path d="M9 10 L14 12 L10 15 Z" fill="#d8f0e0"/></svg>
<div style="position:absolute;left:342px;top:72px;width:82px;height:18px;background:#fff;border:1px solid;border-color:#aca899 #fff #fff #aca899;box-shadow:inset 1px 1px 0 #716f64"></div>
<div class="b" style="position:absolute;left:406px;top:74px;width:16px;height:14px;"></div>
<svg style="left:409px;top:78px" width="10" height="6" viewBox="0 0 10 6"><path d="M1 1 L9 1 L5 5 Z" fill="#000"/></svg>
<div style="position:absolute;left:345.50px;top:75.59px;white-space:pre;font-family:'Liberation Sans',sans-serif;font-size:11px;line-height:13.20px;color:#000;transform:scaleX(0.8422);transform-origin:0 0;">26-1079</div>
<svg style="left:428px;top:72px" width="12" height="17" viewBox="0 0 12 17"><path d="M6 1 L11 6 L11 11 L6 16 L1 11 L1 6 Z" fill="#1aa0a0" stroke="#0a4040"/><path d="M6 3 L9 7 L6 13 L3 7 Z" fill="#60e0e0"/></svg>
<div class="sk" style="position:absolute;left:445px;top:72px;width:451px;height:19px;"></div>
<div style="position:absolute;left:449.50px;top:74.59px;white-space:pre;font-family:'Liberation Sans',sans-serif;font-size:11px;line-height:13.20px;color:#2424a0;transform:scaleX(0.8532);transform-origin:0 0;">Invalid Paint Range!</div>
<svg style="left:881px;top:75px" width="9" height="12" viewBox="0 0 9 12"><path d="M3 1 L6 1 L6 6 L8.5 6 L4.5 11 L0.5 6 L3 6 Z" fill="#000"/></svg>
<svg style="left:1px;top:96px" width="13" height="11" viewBox="0 0 13 11"><path d="M0.5 2.5 L4 2.5 L5 0.5 L8 0.5 L8.5 2.5 L12.5 2.5 L12.5 10.5 L0.5 10.5 Z" fill="#30c8d8" stroke="#106070"/><path d="M1 4.5 L12 4.5" stroke="#106070"/></svg>
<div style="position:absolute;left:17px;top:93px;width:30px;height:17px;background:#fff;border:1px solid;border-color:#aca899 #fff #fff #aca899"></div>
<div style="position:absolute;left:19.00px;top:94.64px;white-space:pre;font-family:'Liberation Sans',sans-serif;font-size:12px;line-height:14.40px;color:#000;transform:scaleX(0.8474);transform-origin:0 0;">Cu</div>
<div style="position:absolute;left:33px;top:94px;width:13px;height:15px;background:#f4f3ee"></div>
<svg style="left:36px;top:100px" width="8" height="5" viewBox="0 0 8 5"><path d="M0 0 L8 0 L4 4 Z" fill="#000"/></svg>
<div style="position:absolute;left:50px;top:93px;width:14px;height:17px;background:#1e6a6a"></div>
<svg style="left:52px;top:95px" width="10" height="13" viewBox="0 0 10 13"><rect x="0.5" y="0.5" width="9" height="12" fill="#f0f0ff" stroke="#333"/><path d="M2 4 L8 4 M2 7 L8 7" stroke="#a03080" stroke-width="1.5"/></svg>
<div style="position:absolute;left:65px;top:93px;width:11px;height:17px;background:#ece9d8"></div>
<svg style="left:66px;top:95px" width="9" height="13" viewBox="0 0 9 13"><path d="M4.5 2 L6.5 5 L2.5 5 Z M2.5 10 L6.5 10 L4.5 13 Z" fill="#000"/><path d="M0 7.5 L9 7.5" stroke="#aca899"/></svg>
<div style="position:absolute;left:78px;top:93px;width:159px;height:17px;background:#fff;border:1px solid;border-color:#aca899 #fff #fff #aca899"></div>
<div style="position:absolute;left:81.00px;top:95.59px;white-space:pre;font-family:'Liberation Sans',sans-serif;font-size:11px;line-height:13.20px;color:#000;transform:scaleX(0.8783);transform-origin:0 0;">17N-919-HL117YBAYLR.ASC</div>
<div style="position:absolute;left:219px;top:94px;width:17px;height:15px;background:#f1efe6"></div>
<svg style="left:224px;top:100px" width="8" height="5" viewBox="0 0 8 5"><path d="M0 0 L8 0 L4 4 Z" fill="#000"/></svg>
<div style="position:absolute;left:240px;top:93px;width:229px;height:17px;background:#fff;border-left:1px solid #aca899"></div>
<div style="position:absolute;left:0px;top:110px;width:198px;height:546px;background:#fff"></div>
<div style="position:absolute;left:0px;top:111px;width:195px;height:15px;background:#ece9d8;border:1px solid;border-color:#fff #888578 #888578 #fff;border-bottom-width:2px"></div>
<div style="position:absolute;left:141px;top:112px;width:1px;height:13px;background:#9d9a8a"></div>
<div style="position:absolute;left:142px;top:112px;width:1px;height:13px;background:#fff"></div>
<div style="position:absolute;left:4.50px;top:112.56px;white-space:pre;font-family:'Liberation Sans',sans-serif;font-size:10.5px;line-height:12.60px;color:#111;transform:scaleX(0.8695);transform-origin:0 0;">9 Files</div>
<div style="position:absolute;left:148.00px;top:112.56px;white-space:pre;font-family:'Liberation Sans',sans-serif;font-size:10.5px;line-height:12.60px;color:#111;transform:scaleX(0.9017);transform-origin:0 0;">Date</div>
<svg style="left:103px;top:115px" width="10" height="8" viewBox="0 0 10 8"><rect x="0.5" y="0.5" width="9" height="7" fill="#fff" stroke="#222"/><path d="M3.5 6 L3.5 4 M5.5 6 L5.5 2.5 M7.5 6 L7.5 4" stroke="#222"/></svg>
<svg style="left:116px;top:114px" width="10" height="10" viewBox="0 0 10 10"><circle cx="5" cy="5" r="4.5" fill="#30b0c8" stroke="#1a5a7a"/><path d="M2.5 5 L4.5 7 L7.5 3" stroke="#0a2a4a" stroke-width="1.2" fill="none"/></svg>
<svg style="left:128px;top:114px" width="10" height="9" viewBox="0 0 10 9"><path d="M0.5 1 L4 1 L5 2.5 L9.5 2.5 L9.5 8.5 L0.5 8.5 Z" fill="#f0e800" stroke="#6a6a00"/><path d="M4 6 L7 6" stroke="#222"/></svg>
<div style="position:absolute;left:0px;top:126px;width:195px;height:13px;background:#f1efe6"></div>
<div style="position:absolute;left:3.00px;top:126.59px;white-space:pre;font-family:'Liberation Sans',sans-serif;font-size:11px;line-height:13.20px;color:#1a1a1a;transform:scaleX(0.8536);transform-origin:0 0;">17N-919-HL117YBAYLR.ASC</div>
<div style="position:absolute;left:148.00px;top:126.59px;white-space:pre;font-family:'Liberation Sans',sans-serif;font-size:11px;line-height:13.20px;color:#1a1a1a;transform:scaleX(0.8403);transform-origin:0 0;">08-02-17</div>
<div style="position:absolute;left:3.00px;top:138.96px;white-space:pre;font-family:'Liberation Sans',sans-serif;font-size:11px;line-height:13.20px;color:#2a2a82;transform:scaleX(0.8536);transform-origin:0 0;">17N-919-HL117YBAYLRG.ASC</div>
<div style="position:absolute;left:148.00px;top:138.96px;white-space:pre;font-family:'Liberation Sans',sans-serif;font-size:11px;line-height:13.20px;color:#2a2a82;transform:scaleX(0.8403);transform-origin:0 0;">08-02-17</div>
<div style="position:absolute;left:3.00px;top:151.33px;white-space:pre;font-family:'Liberation Sans',sans-serif;font-size:11px;line-height:13.20px;color:#2a2a82;transform:scaleX(0.8536);transform-origin:0 0;">17N-919-HL117YBAYLRG&quot;.ASC</div>
<div style="position:absolute;left:148.00px;top:151.33px;white-space:pre;font-family:'Liberation Sans',sans-serif;font-size:11px;line-height:13.20px;color:#2a2a82;transform:scaleX(0.8403);transform-origin:0 0;">08-02-17</div>
<div style="position:absolute;left:3.00px;top:163.70px;white-space:pre;font-family:'Liberation Sans',sans-serif;font-size:11px;line-height:13.20px;color:#2a2a82;transform:scaleX(0.8536);transform-origin:0 0;">17N-919-HL117YBBYLR.ASC</div>
<div style="position:absolute;left:148.00px;top:163.70px;white-space:pre;font-family:'Liberation Sans',sans-serif;font-size:11px;line-height:13.20px;color:#2a2a82;transform:scaleX(0.8403);transform-origin:0 0;">08-02-17</div>
<div style="position:absolute;left:3.00px;top:176.07px;white-space:pre;font-family:'Liberation Sans',sans-serif;font-size:11px;line-height:13.20px;color:#2a2a82;transform:scaleX(0.8536);transform-origin:0 0;">17N-919-HL117YBBYLRG.ASC</div>
<div style="position:absolute;left:148.00px;top:176.07px;white-space:pre;font-family:'Liberation Sans',sans-serif;font-size:11px;line-height:13.20px;color:#2a2a82;transform:scaleX(0.8403);transform-origin:0 0;">08-02-17</div>
<div style="position:absolute;left:3.00px;top:188.44px;white-space:pre;font-family:'Liberation Sans',sans-serif;font-size:11px;line-height:13.20px;color:#2a2a82;transform:scaleX(0.8536);transform-origin:0 0;">17N-919-HL117YBBYLRG&#x27;.ASC</div>
<div style="position:absolute;left:148.00px;top:188.44px;white-space:pre;font-family:'Liberation Sans',sans-serif;font-size:11px;line-height:13.20px;color:#2a2a82;transform:scaleX(0.8403);transform-origin:0 0;">08-02-17</div>
<div style="position:absolute;left:3.00px;top:200.81px;white-space:pre;font-family:'Liberation Sans',sans-serif;font-size:11px;line-height:13.20px;color:#2a2a82;transform:scaleX(0.8536);transform-origin:0 0;">17N-919-HL117YBCYLR.ASC</div>
<div style="position:absolute;left:148.00px;top:200.81px;white-space:pre;font-family:'Liberation Sans',sans-serif;font-size:11px;line-height:13.20px;color:#2a2a82;transform:scaleX(0.8403);transform-origin:0 0;">08-02-17</div>
<div style="position:absolute;left:3.00px;top:213.18px;white-space:pre;font-family:'Liberation Sans',sans-serif;font-size:11px;line-height:13.20px;color:#2a2a82;transform:scaleX(0.8536);transform-origin:0 0;">17N-919-HL117YBCYLRG.ASC</div>
<div style="position:absolute;left:148.00px;top:213.18px;white-space:pre;font-family:'Liberation Sans',sans-serif;font-size:11px;line-height:13.20px;color:#2a2a82;transform:scaleX(0.8403);transform-origin:0 0;">08-02-17</div>
<div style="position:absolute;left:3.00px;top:225.55px;white-space:pre;font-family:'Liberation Sans',sans-serif;font-size:11px;line-height:13.20px;color:#2a2a82;transform:scaleX(0.8536);transform-origin:0 0;">17N-919-HL117YBCYLRG&#x27;.ASC</div>
<div style="position:absolute;left:148.00px;top:225.55px;white-space:pre;font-family:'Liberation Sans',sans-serif;font-size:11px;line-height:13.20px;color:#2a2a82;transform:scaleX(0.8403);transform-origin:0 0;">08-02-17</div>
<div style="position:absolute;left:116px;top:382px;width:81px;height:68px;background:#ece9d8"></div>
<div style="position:absolute;left:0px;top:385px;width:116px;height:2px;background:#8c8c8c"></div>
<svg style="left:0;top:380px" width="117" height="20"><path d="M0 17.5 L116 8" stroke="#333" stroke-width="1.1"/></svg>
<div style="position:absolute;left:0px;top:450px;width:195px;height:15px;background:#ece9d8;border:1px solid;border-color:#fff #888578 #888578 #fff;border-bottom-width:2px"></div>
<div style="position:absolute;left:141px;top:451px;width:1px;height:13px;background:#9d9a8a"></div>
<div style="position:absolute;left:142px;top:451px;width:1px;height:13px;background:#fff"></div>
<div style="position:absolute;left:4.50px;top:451.56px;white-space:pre;font-family:'Liberation Sans',sans-serif;font-size:10.5px;line-height:12.60px;color:#111;transform:scaleX(0.8695);transform-origin:0 0;">0 Files</div>
<div style="position:absolute;left:148.00px;top:451.56px;white-space:pre;font-family:'Liberation Sans',sans-serif;font-size:10.5px;line-height:12.60px;color:#111;transform:scaleX(0.9017);transform-origin:0 0;">Date</div>
<svg style="left:116px;top:453px" width="10" height="10" viewBox="0 0 10 10"><circle cx="5" cy="5" r="4.5" fill="#30b0c8" stroke="#1a5a7a"/><path d="M2.5 5 L4.5 7 L7.5 3" stroke="#0a2a4a" stroke-width="1.2" fill="none"/></svg>
<svg style="left:128px;top:453px" width="10" height="9" viewBox="0 0 10 9"><path d="M0.5 1 L4 1 L5 2.5 L9.5 2.5 L9.5 8.5 L0.5 8.5 Z" fill="#f0e800" stroke="#6a6a00"/><path d="M4 6 L7 6" stroke="#222"/></svg>
<div style="position:absolute;left:198px;top:110px;width:698px;height:546px;background:#008080"></div>
<div style="position:absolute;left:469px;top:93px;width:427px;height:17px;background:#008080"></div>
<div style="position:absolute;left:474.00px;top:95.09px;white-space:pre;font-family:'Liberation Sans',sans-serif;font-size:11px;line-height:13.20px;color:#c8fff8;transform:scaleX(0.8529);transform-origin:0 0;">SCAN: 15.0054/34.9974/0.017/1(sec), Cu, I(max&lt;2T=15.005-34.997&gt;8:47</div>
<div style="position:absolute;left:791px;top:96px;width:11px;height:11px;background:#fff;border:1px solid;border-color:#aca899 #fff #fff #aca899"></div>
<div style="position:absolute;left:806.00px;top:94.59px;white-space:pre;font-family:'Liberation Sans',sans-serif;font-size:11px;line-height:13.20px;color:#c8fff8;transform:scaleX(0.8751);transform-origin:0 0;">2T(0)</div>
<div style="position:absolute;left:833px;top:93px;width:44px;height:16px;background:#fff"></div>
<div style="position:absolute;left:835.00px;top:94.59px;white-space:pre;font-family:'Liberation Sans',sans-serif;font-size:11px;line-height:13.20px;color:#000;transform:scaleX(0.8501);transform-origin:0 0;">0.0</div>
<div class="b" style="position:absolute;left:879px;top:93px;width:16px;height:15px;"></div>
<div style="position:absolute;left:882px;top:98px;width:10px;height:5px;background:#000"></div>
<div style="position:absolute;left:216px;top:110px;width:661px;height:72px;background:#000"></div>
<div style="position:absolute;left:247px;top:205px;width:630px;height:435px;background:#000"></div>
<div class="b" style="position:absolute;left:200px;top:110px;width:14px;height:16px;"></div>
<svg style="left:203px;top:114px" width="8" height="8" viewBox="0 0 8 8"><path d="M1.5 1.5 L7 1.5 M1.5 4.5 L7 4.5 M1.5 7.5 L7 7.5 M1.5 1 L1.5 8" stroke="#000" stroke-width="1.2"/></svg>
<div class="b" style="position:absolute;left:200px;top:205px;width:14px;height:16px;"></div>
<svg style="left:203px;top:209px" width="8" height="8" viewBox="0 0 8 8"><path d="M1.5 1.5 L7 1.5 M1.5 4.5 L7 4.5 M1.5 7.5 L7 7.5 M1.5 1 L1.5 8" stroke="#000" stroke-width="1.2"/></svg>
<div style="left:206.5px;top:161.5px;width:0;height:0"><div style="left:0;top:0;transform:translate(-50%,-50%) rotate(-90deg) scaleX(1.062);white-space:pre;font-size:11px;line-height:11px;color:#a0f0ec;font-family:'Liberation Sans',sans-serif">Counts</div></div>
<div style="left:206.5px;top:422px;width:0;height:0"><div style="left:0;top:0;transform:translate(-50%,-50%) rotate(-90deg) scaleX(1.058);white-space:pre;font-size:11px;line-height:11px;color:#a0f0ec;font-family:'Liberation Sans',sans-serif">Intensity(Counts)</div></div>
<div style="position:absolute;left:223.37px;top:230.29px;white-space:pre;font-family:'Liberation Sans',sans-serif;font-size:11px;line-height:13.20px;color:#a0f0ec;transform:scaleX(0.8700);transform-origin:0 0;">10.0</div>
<div style="position:absolute;left:243px;top:237px;width:3px;height:1px;background:#a0f0ec"></div>
<div style="position:absolute;left:228.70px;top:310.69px;white-space:pre;font-family:'Liberation Sans',sans-serif;font-size:11px;line-height:13.20px;color:#a0f0ec;transform:scaleX(0.8700);transform-origin:0 0;">8.0</div>
<div style="position:absolute;left:243px;top:317px;width:3px;height:1px;background:#a0f0ec"></div>
<div style="position:absolute;left:228.70px;top:391.09px;white-space:pre;font-family:'Liberation Sans',sans-serif;font-size:11px;line-height:13.20px;color:#a0f0ec;transform:scaleX(0.8700);transform-origin:0 0;">6.0</div>
<div style="position:absolute;left:243px;top:398px;width:3px;height:1px;background:#a0f0ec"></div>
<div style="position:absolute;left:228.70px;top:471.49px;white-space:pre;font-family:'Liberation Sans',sans-serif;font-size:11px;line-height:13.20px;color:#a0f0ec;transform:scaleX(0.8700);transform-origin:0 0;">4.0</div>
<div style="position:absolute;left:243px;top:478px;width:3px;height:1px;background:#a0f0ec"></div>
<div style="position:absolute;left:228.70px;top:551.89px;white-space:pre;font-family:'Liberation Sans',sans-serif;font-size:11px;line-height:13.20px;color:#a0f0ec;transform:scaleX(0.8700);transform-origin:0 0;">2.0</div>
<div style="position:absolute;left:243px;top:558px;width:3px;height:1px;background:#a0f0ec"></div>
<div style="position:absolute;left:216.76px;top:629.59px;white-space:pre;font-family:'Liberation Sans',sans-serif;font-size:11px;line-height:13.20px;color:#a0f0ec;transform:scaleX(0.8700);transform-origin:0 0;">x10^3</div>
<div style="position:absolute;left:244px;top:638px;width:2px;height:1px;background:#a0f0ec"></div>
<div style="position:absolute;left:262px;top:640px;width:1px;height:3px;background:#a0f0ec"></div>
<div style="position:absolute;left:278px;top:640px;width:1px;height:3px;background:#a0f0ec"></div>
<div style="position:absolute;left:272.57px;top:642.59px;white-space:pre;font-family:'Liberation Sans',sans-serif;font-size:11px;line-height:13.20px;color:#a0f0ec;transform:scaleX(0.8700);transform-origin:0 0;">16</div>
<div style="position:absolute;left:294px;top:640px;width:1px;height:3px;background:#a0f0ec"></div>
<div style="position:absolute;left:309px;top:640px;width:1px;height:3px;background:#a0f0ec"></div>
<div style="position:absolute;left:304.12px;top:642.59px;white-space:pre;font-family:'Liberation Sans',sans-serif;font-size:11px;line-height:13.20px;color:#a0f0ec;transform:scaleX(0.8700);transform-origin:0 0;">17</div>
<div style="position:absolute;left:325px;top:640px;width:1px;height:3px;background:#a0f0ec"></div>
<div style="position:absolute;left:341px;top:640px;width:1px;height:3px;background:#a0f0ec"></div>
<div style="position:absolute;left:335.67px;top:642.59px;white-space:pre;font-family:'Liberation Sans',sans-serif;font-size:11px;line-height:13.20px;color:#a0f0ec;transform:scaleX(0.8700);transform-origin:0 0;">18</div>
<div style="position:absolute;left:357px;top:640px;width:1px;height:3px;background:#a0f0ec"></div>
<div style="position:absolute;left:373px;top:640px;width:1px;height:3px;background:#a0f0ec"></div>
<div style="position:absolute;left:367.22px;top:642.59px;white-space:pre;font-family:'Liberation Sans',sans-serif;font-size:11px;line-height:13.20px;color:#a0f0ec;transform:scaleX(0.8700);transform-origin:0 0;">19</div>
<div style="position:absolute;left:388px;top:640px;width:1px;height:3px;background:#a0f0ec"></div>
<div style="position:absolute;left:404px;top:640px;width:1px;height:3px;background:#a0f0ec"></div>
<div style="position:absolute;left:398.77px;top:642.59px;white-space:pre;font-family:'Liberation Sans',sans-serif;font-size:11px;line-height:13.20px;color:#a0f0ec;transform:scaleX(0.8700);transform-origin:0 0;">20</div>
<div style="position:absolute;left:420px;top:640px;width:1px;height:3px;background:#a0f0ec"></div>
<div style="position:absolute;left:436px;top:640px;width:1px;height:3px;background:#a0f0ec"></div>
<div style="position:absolute;left:430.32px;top:642.59px;white-space:pre;font-family:'Liberation Sans',sans-serif;font-size:11px;line-height:13.20px;color:#a0f0ec;transform:scaleX(0.8700);transform-origin:0 0;">21</div>
<div style="position:absolute;left:451px;top:640px;width:1px;height:3px;background:#a0f0ec"></div>
<div style="position:absolute;left:467px;top:640px;width:1px;height:3px;background:#a0f0ec"></div>
<div style="position:absolute;left:461.87px;top:642.59px;white-space:pre;font-family:'Liberation Sans',sans-serif;font-size:11px;line-height:13.20px;color:#a0f0ec;transform:scaleX(0.8700);transform-origin:0 0;">22</div>
<div style="position:absolute;left:483px;top:640px;width:1px;height:3px;background:#a0f0ec"></div>
<div style="position:absolute;left:499px;top:640px;width:1px;height:3px;background:#a0f0ec"></div>
<div style="position:absolute;left:493.42px;top:642.59px;white-space:pre;font-family:'Liberation Sans',sans-serif;font-size:11px;line-height:13.20px;color:#a0f0ec;transform:scaleX(0.8700);transform-origin:0 0;">23</div>
<div style="position:absolute;left:515px;top:640px;width:1px;height:3px;background:#a0f0ec"></div>
<div style="position:absolute;left:530px;top:640px;width:1px;height:3px;background:#a0f0ec"></div>
<div style="position:absolute;left:524.97px;top:642.59px;white-space:pre;font-family:'Liberation Sans',sans-serif;font-size:11px;line-height:13.20px;color:#a0f0ec;transform:scaleX(0.8700);transform-origin:0 0;">24</div>
<div style="position:absolute;left:546px;top:640px;width:1px;height:3px;background:#a0f0ec"></div>
<div style="position:absolute;left:562px;top:640px;width:1px;height:3px;background:#a0f0ec"></div>
<div style="position:absolute;left:556.52px;top:642.59px;white-space:pre;font-family:'Liberation Sans',sans-serif;font-size:11px;line-height:13.20px;color:#a0f0ec;transform:scaleX(0.8700);transform-origin:0 0;">25</div>
<div style="position:absolute;left:578px;top:640px;width:1px;height:3px;background:#a0f0ec"></div>
<div style="position:absolute;left:593px;top:640px;width:1px;height:3px;background:#a0f0ec"></div>
<div style="position:absolute;left:588.07px;top:642.59px;white-space:pre;font-family:'Liberation Sans',sans-serif;font-size:11px;line-height:13.20px;color:#a0f0ec;transform:scaleX(0.8700);transform-origin:0 0;">26</div>
<div style="position:absolute;left:609px;top:640px;width:1px;height:3px;background:#a0f0ec"></div>
<div style="position:absolute;left:625px;top:640px;width:1px;height:3px;background:#a0f0ec"></div>
<div style="position:absolute;left:619.62px;top:642.59px;white-space:pre;font-family:'Liberation Sans',sans-serif;font-size:11px;line-height:13.20px;color:#a0f0ec;transform:scaleX(0.8700);transform-origin:0 0;">27</div>
<div style="position:absolute;left:641px;top:640px;width:1px;height:3px;background:#a0f0ec"></div>
<div style="position:absolute;left:656px;top:640px;width:1px;height:3px;background:#a0f0ec"></div>
<div style="position:absolute;left:651.17px;top:642.59px;white-space:pre;font-family:'Liberation Sans',sans-serif;font-size:11px;line-height:13.20px;color:#a0f0ec;transform:scaleX(0.8700);transform-origin:0 0;">28</div>
<div style="position:absolute;left:672px;top:640px;width:1px;height:3px;background:#a0f0ec"></div>
<div style="position:absolute;left:688px;top:640px;width:1px;height:3px;background:#a0f0ec"></div>
<div style="position:absolute;left:682.72px;top:642.59px;white-space:pre;font-family:'Liberation Sans',sans-serif;font-size:11px;line-height:13.20px;color:#a0f0ec;transform:scaleX(0.8700);transform-origin:0 0;">29</div>
<div style="position:absolute;left:704px;top:640px;width:1px;height:3px;background:#a0f0ec"></div>
<div style="position:absolute;left:720px;top:640px;width:1px;height:3px;background:#a0f0ec"></div>
<div style="position:absolute;left:714.27px;top:642.59px;white-space:pre;font-family:'Liberation Sans',sans-serif;font-size:11px;line-height:13.20px;color:#a0f0ec;transform:scaleX(0.8700);transform-origin:0 0;">30</div>
<div style="position:absolute;left:735px;top:640px;width:1px;height:3px;background:#a0f0ec"></div>
<div style="position:absolute;left:751px;top:640px;width:1px;height:3px;background:#a0f0ec"></div>
<div style="position:absolute;left:745.82px;top:642.59px;white-space:pre;font-family:'Liberation Sans',sans-serif;font-size:11px;line-height:13.20px;color:#a0f0ec;transform:scaleX(0.8700);transform-origin:0 0;">31</div>
<div style="position:absolute;left:767px;top:640px;width:1px;height:3px;background:#a0f0ec"></div>
<div style="position:absolute;left:783px;top:640px;width:1px;height:3px;background:#a0f0ec"></div>
<div style="position:absolute;left:777.37px;top:642.59px;white-space:pre;font-family:'Liberation Sans',sans-serif;font-size:11px;line-height:13.20px;color:#a0f0ec;transform:scaleX(0.8700);transform-origin:0 0;">32</div>
<div style="position:absolute;left:798px;top:640px;width:1px;height:3px;background:#a0f0ec"></div>
<div style="position:absolute;left:814px;top:640px;width:1px;height:3px;background:#a0f0ec"></div>
<div style="position:absolute;left:808.92px;top:642.59px;white-space:pre;font-family:'Liberation Sans',sans-serif;font-size:11px;line-height:13.20px;color:#a0f0ec;transform:scaleX(0.8700);transform-origin:0 0;">33</div>
<div style="position:absolute;left:830px;top:640px;width:1px;height:3px;background:#a0f0ec"></div>
<div style="position:absolute;left:846px;top:640px;width:1px;height:3px;background:#a0f0ec"></div>
<div style="position:absolute;left:840.47px;top:642.59px;white-space:pre;font-family:'Liberation Sans',sans-serif;font-size:11px;line-height:13.20px;color:#a0f0ec;transform:scaleX(0.8700);transform-origin:0 0;">34</div>
<div style="position:absolute;left:862px;top:640px;width:1px;height:3px;background:#a0f0ec"></div>
<svg style="left:247px;top:204px" width="630" height="435" viewBox="0 0 630 435"><polygon points="256.0,417.35 256.5,419.39 257.0,416.54 257.5,419.63 258.0,419.00 258.5,419.64 259.0,418.45 259.5,417.62 260.0,418.17 260.5,418.20 261.0,419.20 261.5,418.31 262.0,418.99 262.5,419.04 263.0,419.91 263.5,416.65 264.0,418.14 264.5,419.17 265.0,419.15 265.5,417.94 266.0,418.20 266.5,418.35 267.0,418.55 267.5,417.86 268.0,417.77 268.5,417.29 269.0,417.98 269.5,419.65 270.0,417.39 270.5,419.20 271.0,420.12 271.5,418.43 272.0,420.49 272.5,418.06 273.0,419.78 273.5,418.10 274.0,416.96 274.5,418.44 275.0,419.90 275.5,417.48 276.0,418.49 276.5,417.04 277.0,417.12 277.5,418.39 278.0,417.74 278.5,418.44 279.0,419.10 279.5,416.68 280.0,417.13 280.5,417.82 281.0,420.01 281.5,417.39 282.0,417.21 282.5,418.08 283.0,419.68 283.5,417.01 284.0,417.25 284.5,417.56 285.0,418.22 285.5,419.59 286.0,416.18 286.5,415.73 287.0,417.48 287.5,417.82 288.0,415.04 288.5,416.60 289.0,418.12 289.5,416.60 290.0,417.56 290.5,417.21 291.0,417.64 291.5,417.38 292.0,417.16 292.5,418.10 293.0,416.23 293.5,416.87 294.0,417.83 294.5,416.07 295.0,416.21 295.5,415.77 296.0,415.52 296.5,418.47 297.0,416.83 297.5,418.20 298.0,416.97 298.5,416.24 299.0,415.80 299.5,416.30 300.0,415.91 300.5,416.82 301.0,414.91 301.5,415.91 302.0,416.13 302.5,415.34 303.0,415.25 303.5,415.98 304.0,415.91 304.5,415.13 305.0,415.13 305.5,414.47 306.0,415.55 306.5,414.73 307.0,413.10 307.5,414.32 308.0,415.20 308.5,414.74 309.0,413.37 309.5,415.00 310.0,414.74 310.5,414.62 311.0,415.50 311.5,413.35 312.0,414.24 312.5,413.16 313.0,414.39 313.5,414.44 314.0,413.55 314.5,413.68 315.0,411.79 315.5,413.23 316.0,411.03 316.5,414.64 317.0,413.32 317.5,410.09 318.0,408.59 318.5,412.94 319.0,410.25 319.5,411.66 320.0,409.30 320.5,410.67 321.0,409.60 321.5,410.83 322.0,409.48 322.5,411.41 323.0,408.45 323.5,410.64 324.0,408.79 324.5,409.16 325.0,406.25 325.5,405.72 326.0,408.90 326.5,405.69 327.0,406.46 327.5,406.12 328.0,404.99 328.5,406.03 329.0,403.50 329.5,403.35 330.0,405.72 330.5,402.94 331.0,404.56 331.5,403.95 332.0,404.63 332.5,402.61 333.0,398.80 333.5,399.87 334.0,399.58 334.5,401.33 335.0,399.35 335.5,397.38 336.0,398.02 336.5,396.01 337.0,396.59 337.5,395.09 338.0,395.72 338.5,393.49 339.0,393.57 339.5,390.77 340.0,390.84 340.5,388.11 341.0,388.13 341.5,385.97 342.0,383.83 342.5,381.65 343.0,380.09 343.5,379.41 344.0,372.54 344.5,376.25 345.0,367.54 345.5,368.50 346.0,365.26 346.5,363.82 347.0,359.43 347.5,355.13 348.0,351.25 348.5,348.34 349.0,346.05 349.5,337.74 350.0,328.33 350.5,325.62 351.0,321.26 351.5,320.13 352.0,306.78 352.5,300.77 353.0,295.34 353.5,287.52 354.0,276.86 354.5,272.41 355.0,259.63 355.5,251.88 356.0,244.33 356.5,228.74 357.0,218.48 357.5,209.08 358.0,192.00 358.5,175.94 359.0,161.18 359.5,147.31 360.0,126.37 360.5,110.91 361.0,92.58 361.5,76.81 362.0,65.88 362.5,50.22 363.0,38.68 363.5,32.20 364.0,25.67 364.5,24.06 365.0,34.55 365.5,48.55 366.0,66.33 366.5,93.88 367.0,122.12 367.5,147.76 368.0,174.16 368.5,195.89 369.0,220.42 369.5,237.85 370.0,261.18 370.5,275.13 371.0,291.97 371.5,300.96 372.0,314.87 372.5,320.42 373.0,331.07 373.5,340.33 374.0,346.76 374.5,352.05 375.0,354.67 375.5,364.55 376.0,367.70 376.5,372.37 377.0,375.81 377.5,376.36 378.0,380.52 378.5,386.99 379.0,383.34 379.5,387.63 380.0,387.93 380.5,393.72 381.0,392.66 381.5,392.19 382.0,394.34 382.5,394.41 383.0,394.33 383.5,394.87 384.0,398.93 384.5,399.34 385.0,402.11 385.5,401.59 386.0,403.85 386.5,406.71 387.0,403.41 387.5,404.04 388.0,407.55 388.5,409.89 389.0,406.28 389.5,405.77 390.0,408.04 390.5,408.36 391.0,410.18 391.5,408.43 392.0,409.80 392.5,410.11 393.0,408.97 393.5,409.33 394.0,412.02 394.5,412.44 395.0,411.18 395.5,414.17 396.0,413.71 396.5,413.42 397.0,413.83 397.5,413.76 398.0,414.40 398.5,414.77 399.0,414.09 399.5,411.95 400.0,414.22 400.5,413.67 401.0,413.46 401.5,415.56 402.0,413.15 402.5,416.12 403.0,414.69 403.5,414.21 404.0,414.73 404.5,418.26 405.0,417.47 405.5,415.74 406.0,417.28 406.5,418.13 407.0,415.47 407.5,416.19 408.0,417.55 408.5,417.11 409.0,416.41 409.5,418.56 410.0,417.50 410.5,417.88 411.0,419.60 411.5,417.73 412.0,420.02 412.5,417.70 413.0,417.31 413.5,417.67 414.0,418.50 414.5,418.35 415.0,418.13 415.5,416.32 416.0,416.78 416.5,417.67 417.0,418.73 417.5,419.51 418.0,415.71 418.5,418.02 419.0,417.77 419.5,418.17 420.0,418.54 420.5,417.53 421.0,417.11 421.5,419.47 422.0,419.26 422.5,418.15 423.0,418.49 423.5,417.97 424.0,417.30 424.5,419.37 425.0,418.12 425.5,417.71 426.0,418.26 426.5,420.49 427.0,419.36 427.5,419.19 428.0,419.08 428.5,419.87 429.0,419.78 429.5,417.82 430.0,418.89 430.5,418.52 431.0,419.39 431.5,419.15 432.0,417.30 432.5,420.39 433.0,419.55 433.5,417.65 434.0,420.46 434.5,419.50 435.0,419.86 435.5,419.46 436.0,419.61 436.5,418.99 437.0,417.89 437.5,418.92 438.0,419.71 438.5,419.60 439.0,420.21 439.5,419.51 440.0,417.47 440.5,420.34 441.0,418.88 441.5,418.39 442.0,419.39 442.5,418.41 443.0,420.08 443.5,418.87 444.0,421.62 444.5,419.55 445.0,419.27 445.5,419.19 446.0,417.78 446.5,419.02 447.0,419.15 447.5,419.57 448.0,417.79 448,422.0 256,421.0" fill="#800080"/><path d="M256 421.5 L448 422.5" stroke="#e8b8e8" stroke-width="1"/><polyline points="0.0,415.23 0.5,413.33 1.0,413.09 1.5,411.06 2.0,413.39 2.5,413.05 3.0,412.79 3.5,413.49 4.0,413.53 4.5,412.12 5.0,412.22 5.5,412.53 6.0,413.52 6.5,413.34 7.0,411.59 7.5,411.69 8.0,413.31 8.5,413.92 9.0,412.33 9.5,411.59 10.0,413.06 10.5,411.64 11.0,412.43 11.5,413.03 12.0,412.06 12.5,411.41 13.0,411.86 13.5,410.47 14.0,410.75 14.5,410.25 15.0,410.44 15.5,410.04 16.0,410.17 16.5,410.12 17.0,410.67 17.5,410.77 18.0,411.11 18.5,412.24 19.0,409.70 19.5,412.40 20.0,411.14 20.5,410.37 21.0,411.45 21.5,411.82 22.0,412.83 22.5,411.03 23.0,412.31 23.5,412.35 24.0,410.85 24.5,411.43 25.0,413.17 25.5,413.34 26.0,413.79 26.5,413.37 27.0,413.34 27.5,413.18 28.0,414.25 28.5,412.48 29.0,413.20 29.5,413.77 30.0,412.08 30.5,414.78 31.0,412.97 31.5,413.71 32.0,415.81 32.5,413.20 33.0,413.56 33.5,415.54 34.0,413.24 34.5,413.91 35.0,414.86 35.5,414.89 36.0,415.11 36.5,414.99 37.0,415.96 37.5,415.75 38.0,415.46 38.5,414.39 39.0,414.45 39.5,413.46 40.0,415.90 40.5,413.71 41.0,416.25 41.5,417.21 42.0,414.67 42.5,415.10 43.0,415.37 43.5,416.57 44.0,415.05 44.5,415.73 45.0,415.39 45.5,415.65 46.0,417.06 46.5,415.03 47.0,415.98 47.5,416.18 48.0,416.72 48.5,414.81 49.0,416.98 49.5,416.38 50.0,416.79 50.5,416.08 51.0,414.54 51.5,415.46 52.0,416.80 52.5,416.10 53.0,416.04 53.5,417.72 54.0,418.11 54.5,416.09 55.0,417.89 55.5,414.35 56.0,414.31 56.5,416.97 57.0,415.96 57.5,416.73 58.0,416.69 58.5,416.16 59.0,416.87 59.5,416.40 60.0,414.89 60.5,416.49 61.0,416.47 61.5,417.98 62.0,415.31 62.5,416.36 63.0,415.98 63.5,416.25 64.0,417.89 64.5,416.75 65.0,416.00 65.5,416.57 66.0,417.14 66.5,415.56 67.0,416.23 67.5,417.88 68.0,417.27 68.5,416.47 69.0,416.09 69.5,416.40 70.0,415.15 70.5,417.42 71.0,416.89 71.5,416.72 72.0,415.43 72.5,415.97 73.0,417.10 73.5,416.88 74.0,416.21 74.5,417.14 75.0,417.54 75.5,416.09 76.0,416.24 76.5,415.94 77.0,415.70 77.5,417.48 78.0,417.24 78.5,417.09 79.0,415.74 79.5,415.87 80.0,416.77 80.5,416.47 81.0,416.96 81.5,416.24 82.0,417.48 82.5,418.53 83.0,418.31 83.5,418.38 84.0,417.00 84.5,417.79 85.0,416.62 85.5,417.81 86.0,416.65 86.5,416.56 87.0,416.44 87.5,417.67 88.0,417.30 88.5,417.23 89.0,416.04 89.5,417.22 90.0,415.79 90.5,418.45 91.0,417.01 91.5,417.32 92.0,417.06 92.5,415.73 93.0,415.94 93.5,417.17 94.0,418.56 94.5,416.21 95.0,416.60 95.5,417.21 96.0,415.73 96.5,415.74 97.0,416.92 97.5,417.26 98.0,416.96 98.5,418.73 99.0,417.21 99.5,417.70 100.0,418.84 100.5,418.96 101.0,415.99 101.5,417.11 102.0,418.52 102.5,416.24 103.0,416.67 103.5,416.35 104.0,416.31 104.5,416.53 105.0,417.74 105.5,418.75 106.0,419.01 106.5,417.65 107.0,415.87 107.5,417.62 108.0,417.39 108.5,418.03 109.0,417.62 109.5,416.12 110.0,418.15 110.5,415.91 111.0,417.18 111.5,418.11 112.0,418.16 112.5,419.29 113.0,415.74 113.5,418.21 114.0,418.55 114.5,417.64 115.0,418.54 115.5,416.98 116.0,418.59 116.5,418.50 117.0,417.14 117.5,417.45 118.0,417.90 118.5,417.49 119.0,419.06 119.5,418.29 120.0,419.34 120.5,419.23 121.0,418.24 121.5,418.02 122.0,417.36 122.5,417.51 123.0,417.53 123.5,418.59 124.0,417.49 124.5,418.38 125.0,418.51 125.5,417.90 126.0,418.20 126.5,419.70 127.0,419.87 127.5,417.71 128.0,418.26 128.5,418.12 129.0,418.23 129.5,419.89 130.0,419.14 130.5,419.68 131.0,420.17 131.5,418.17 132.0,418.42 132.5,418.64 133.0,419.56 133.5,418.55 134.0,419.23 134.5,419.71 135.0,419.71 135.5,419.07 136.0,417.95 136.5,417.26 137.0,419.70 137.5,419.11 138.0,417.84 138.5,418.25 139.0,418.30 139.5,417.19 140.0,418.96 140.5,418.02 141.0,418.47 141.5,419.42 142.0,418.67 142.5,419.26 143.0,419.15 143.5,418.80 144.0,418.83 144.5,420.49 145.0,418.64 145.5,420.29 146.0,417.98 146.5,419.48 147.0,418.98 147.5,418.17 148.0,416.43 148.5,420.30 149.0,417.80 149.5,417.98 150.0,418.98 150.5,418.93 151.0,419.13 151.5,418.66 152.0,417.53 152.5,419.69 153.0,418.08 153.5,419.12 154.0,419.44 154.5,420.01 155.0,418.74 155.5,418.66 156.0,418.73 156.5,417.27 157.0,418.27 157.5,418.05 158.0,417.92 158.5,419.13 159.0,418.70 159.5,420.45 160.0,420.36 160.5,417.29 161.0,419.13 161.5,418.11 162.0,419.53 162.5,419.18 163.0,419.89 163.5,419.33 164.0,419.75 164.5,418.79 165.0,416.77 165.5,417.99 166.0,418.30 166.5,418.64 167.0,418.17 167.5,420.59 168.0,418.95 168.5,420.29 169.0,418.81 169.5,420.63 170.0,418.03 170.5,419.68 171.0,417.92 171.5,419.55 172.0,420.60 172.5,417.66 173.0,418.37 173.5,419.39 174.0,419.01 174.5,417.93 175.0,420.25 175.5,419.24 176.0,420.38 176.5,419.50 177.0,418.16 177.5,418.78 178.0,420.49 178.5,417.96 179.0,418.80 179.5,419.78 180.0,420.16 180.5,419.99 181.0,417.89 181.5,421.15 182.0,419.09 182.5,419.26 183.0,419.24 183.5,419.04 184.0,418.36 184.5,418.95 185.0,420.47 185.5,418.01 186.0,417.03 186.5,419.75 187.0,419.57 187.5,419.93 188.0,420.85 188.5,418.60 189.0,419.43 189.5,419.73 190.0,420.40 190.5,420.22 191.0,418.50 191.5,418.01 192.0,419.03 192.5,417.80 193.0,420.30 193.5,418.92 194.0,418.96 194.5,418.47 195.0,420.69 195.5,419.55 196.0,418.91 196.5,419.85 197.0,419.21 197.5,419.84 198.0,420.51 198.5,419.05 199.0,419.77 199.5,419.74 200.0,420.34 200.5,419.85 201.0,419.33 201.5,418.71 202.0,419.57 202.5,418.34 203.0,419.91 203.5,419.36 204.0,419.81 204.5,418.83 205.0,418.57 205.5,418.47 206.0,420.33 206.5,419.11 207.0,419.10 207.5,417.66 208.0,419.26 208.5,416.12 209.0,420.57 209.5,419.09 210.0,419.33 210.5,417.99 211.0,418.30 211.5,419.87 212.0,419.12 212.5,419.71 213.0,420.48 213.5,419.92 214.0,417.55 214.5,418.40 215.0,418.26 215.5,418.47 216.0,417.38 216.5,417.41 217.0,418.62 217.5,418.75 218.0,419.78 218.5,419.00 219.0,420.62 219.5,417.61 220.0,418.01 220.5,419.53 221.0,419.04 221.5,418.38 222.0,420.00 222.5,420.30 223.0,420.50 223.5,418.92 224.0,419.28 224.5,419.49 225.0,419.33 225.5,420.23 226.0,418.82 226.5,419.62 227.0,417.22 227.5,419.97 228.0,420.79 228.5,419.24 229.0,420.23 229.5,417.72 230.0,418.95 230.5,417.82 231.0,419.55 231.5,419.74 232.0,417.97 232.5,418.45 233.0,418.69 233.5,421.49 234.0,419.16 234.5,419.33 235.0,419.55 235.5,419.48 236.0,418.97 236.5,417.95 237.0,418.55 237.5,420.70 238.0,419.40 238.5,418.81 239.0,417.88 239.5,419.09 240.0,419.16 240.5,418.51 241.0,419.95 241.5,418.55 242.0,418.94 242.5,419.87 243.0,419.29 243.5,420.12 244.0,418.84 244.5,418.64 245.0,419.48 245.5,419.23 246.0,420.13 246.5,419.39 247.0,418.97 247.5,419.41 248.0,419.59 248.5,417.91 249.0,418.82 249.5,418.63 250.0,420.06 250.5,418.46 251.0,419.91 251.5,417.70 252.0,418.83 252.5,419.88 253.0,418.61 253.5,419.93 254.0,416.92 254.5,418.84 255.0,418.96 255.5,418.67 256.0,417.35 256.5,419.39 257.0,416.54 257.5,419.63 258.0,419.00 258.5,419.64 259.0,418.45 259.5,417.62 260.0,418.17 260.5,418.20 261.0,419.20 261.5,418.31 262.0,418.99 262.5,419.04 263.0,419.91 263.5,416.65 264.0,418.14 264.5,419.17 265.0,419.15 265.5,417.94 266.0,418.20 266.5,418.35 267.0,418.55 267.5,417.86 268.0,417.77 268.5,417.29 269.0,417.98 269.5,419.65 270.0,417.39 270.5,419.20 271.0,420.12 271.5,418.43 272.0,420.49 272.5,418.06 273.0,419.78 273.5,418.10 274.0,416.96 274.5,418.44 275.0,419.90 275.5,417.48 276.0,418.49 276.5,417.04 277.0,417.12 277.5,418.39 278.0,417.74 278.5,418.44 279.0,419.10 279.5,416.68 280.0,417.13 280.5,417.82 281.0,420.01 281.5,417.39 282.0,417.21 282.5,418.08 283.0,419.68 283.5,417.01 284.0,417.25 284.5,417.56 285.0,418.22 285.5,419.59 286.0,416.18 286.5,415.73 287.0,417.48 287.5,417.82 288.0,415.04 288.5,416.60 289.0,418.12 289.5,416.60 290.0,417.56 290.5,417.21 291.0,417.64 291.5,417.38 292.0,417.16 292.5,418.10 293.0,416.23 293.5,416.87 294.0,417.83 294.5,416.07 295.0,416.21 295.5,415.77 296.0,415.52 296.5,418.47 297.0,416.83 297.5,418.20 298.0,416.97 298.5,416.24 299.0,415.80 299.5,416.30 300.0,415.91 300.5,416.82 301.0,414.91 301.5,415.91 302.0,416.13 302.5,415.34 303.0,415.25 303.5,415.98 304.0,415.91 304.5,415.13 305.0,415.13 305.5,414.47 306.0,415.55 306.5,414.73 307.0,413.10 307.5,414.32 308.0,415.20 308.5,414.74 309.0,413.37 309.5,415.00 310.0,414.74 310.5,414.62 311.0,415.50 311.5,413.35 312.0,414.24 312.5,413.16 313.0,414.39 313.5,414.44 314.0,413.55 314.5,413.68 315.0,411.79 315.5,413.23 316.0,411.03 316.5,414.64 317.0,413.32 317.5,410.09 318.0,408.59 318.5,412.94 319.0,410.25 319.5,411.66 320.0,409.30 320.5,410.67 321.0,409.60 321.5,410.83 322.0,409.48 322.5,411.41 323.0,408.45 323.5,410.64 324.0,408.79 324.5,409.16 325.0,406.25 325.5,405.72 326.0,408.90 326.5,405.69 327.0,406.46 327.5,406.12 328.0,404.99 328.5,406.03 329.0,403.50 329.5,403.35 330.0,405.72 330.5,402.94 331.0,404.56 331.5,403.95 332.0,404.63 332.5,402.61 333.0,398.80 333.5,399.87 334.0,399.58 334.5,401.33 335.0,399.35 335.5,397.38 336.0,398.02 336.5,396.01 337.0,396.59 337.5,395.09 338.0,395.72 338.5,393.49 339.0,393.57 339.5,390.77 340.0,390.84 340.5,388.11 341.0,388.13 341.5,385.97 342.0,383.83 342.5,381.65 343.0,380.09 343.5,379.41 344.0,372.54 344.5,376.25 345.0,367.54 345.5,368.50 346.0,365.26 346.5,363.82 347.0,359.43 347.5,355.13 348.0,351.25 348.5,348.34 349.0,346.05 349.5,337.74 350.0,328.33 350.5,325.62 351.0,321.26 351.5,320.13 352.0,306.78 352.5,300.77 353.0,295.34 353.5,287.52 354.0,276.86 354.5,272.41 355.0,259.63 355.5,251.88 356.0,244.33 356.5,228.74 357.0,218.48 357.5,209.08 358.0,192.00 358.5,175.94 359.0,161.18 359.5,147.31 360.0,126.37 360.5,110.91 361.0,92.58 361.5,76.81 362.0,65.88 362.5,50.22 363.0,38.68 363.5,32.20 364.0,25.67 364.5,24.06 365.0,34.55 365.5,48.55 366.0,66.33 366.5,93.88 367.0,122.12 367.5,147.76 368.0,174.16 368.5,195.89 369.0,220.42 369.5,237.85 370.0,261.18 370.5,275.13 371.0,291.97 371.5,300.96 372.0,314.87 372.5,320.42 373.0,331.07 373.5,340.33 374.0,346.76 374.5,352.05 375.0,354.67 375.5,364.55 376.0,367.70 376.5,372.37 377.0,375.81 377.5,376.36 378.0,380.52 378.5,386.99 379.0,383.34 379.5,387.63 380.0,387.93 380.5,393.72 381.0,392.66 381.5,392.19 382.0,394.34 382.5,394.41 383.0,394.33 383.5,394.87 384.0,398.93 384.5,399.34 385.0,402.11 385.5,401.59 386.0,403.85 386.5,406.71 387.0,403.41 387.5,404.04 388.0,407.55 388.5,409.89 389.0,406.28 389.5,405.77 390.0,408.04 390.5,408.36 391.0,410.18 391.5,408.43 392.0,409.80 392.5,410.11 393.0,408.97 393.5,409.33 394.0,412.02 394.5,412.44 395.0,411.18 395.5,414.17 396.0,413.71 396.5,413.42 397.0,413.83 397.5,413.76 398.0,414.40 398.5,414.77 399.0,414.09 399.5,411.95 400.0,414.22 400.5,413.67 401.0,413.46 401.5,415.56 402.0,413.15 402.5,416.12 403.0,414.69 403.5,414.21 404.0,414.73 404.5,418.26 405.0,417.47 405.5,415.74 406.0,417.28 406.5,418.13 407.0,415.47 407.5,416.19 408.0,417.55 408.5,417.11 409.0,416.41 409.5,418.56 410.0,417.50 410.5,417.88 411.0,419.60 411.5,417.73 412.0,420.02 412.5,417.70 413.0,417.31 413.5,417.67 414.0,418.50 414.5,418.35 415.0,418.13 415.5,416.32 416.0,416.78 416.5,417.67 417.0,418.73 417.5,419.51 418.0,415.71 418.5,418.02 419.0,417.77 419.5,418.17 420.0,418.54 420.5,417.53 421.0,417.11 421.5,419.47 422.0,419.26 422.5,418.15 423.0,418.49 423.5,417.97 424.0,417.30 424.5,419.37 425.0,418.12 425.5,417.71 426.0,418.26 426.5,420.49 427.0,419.36 427.5,419.19 428.0,419.08 428.5,419.87 429.0,419.78 429.5,417.82 430.0,418.89 430.5,418.52 431.0,419.39 431.5,419.15 432.0,417.30 432.5,420.39 433.0,419.55 433.5,417.65 434.0,420.46 434.5,419.50 435.0,419.86 435.5,419.46 436.0,419.61 436.5,418.99 437.0,417.89 437.5,418.92 438.0,419.71 438.5,419.60 439.0,420.21 439.5,419.51 440.0,417.47 440.5,420.34 441.0,418.88 441.5,418.39 442.0,419.39 442.5,418.41 443.0,420.08 443.5,418.87 444.0,421.62 444.5,419.55 445.0,419.27 445.5,419.19 446.0,417.78 446.5,419.02 447.0,419.15 447.5,419.57 448.0,417.79 448.5,419.95 449.0,421.16 449.5,419.54 450.0,419.92 450.5,420.39 451.0,419.24 451.5,419.60 452.0,420.94 452.5,420.23 453.0,418.91 453.5,418.38 454.0,422.23 454.5,420.49 455.0,418.57 455.5,420.21 456.0,420.70 456.5,420.17 457.0,418.29 457.5,421.77 458.0,420.62 458.5,419.87 459.0,420.69 459.5,419.83 460.0,419.73 460.5,420.88 461.0,418.17 461.5,420.97 462.0,420.40 462.5,420.74 463.0,420.88 463.5,421.48 464.0,421.37 464.5,420.84 465.0,419.64 465.5,420.65 466.0,419.55 466.5,419.09 467.0,420.41 467.5,420.32 468.0,421.09 468.5,417.96 469.0,420.52 469.5,420.59 470.0,420.06 470.5,421.33 471.0,419.12 471.5,420.25 472.0,419.58 472.5,419.91 473.0,419.01 473.5,419.81 474.0,420.60 474.5,420.11 475.0,420.34 475.5,419.33 476.0,421.56 476.5,419.45 477.0,420.15 477.5,420.70 478.0,420.01 478.5,420.91 479.0,420.41 479.5,421.85 480.0,420.80 480.5,420.68 481.0,419.58 481.5,420.79 482.0,421.32 482.5,420.80 483.0,419.57 483.5,419.95 484.0,420.27 484.5,420.52 485.0,419.24 485.5,422.29 486.0,420.48 486.5,420.71 487.0,420.21 487.5,420.61 488.0,422.45 488.5,419.82 489.0,420.24 489.5,419.78 490.0,420.25 490.5,422.20 491.0,420.23 491.5,420.41 492.0,419.19 492.5,420.55 493.0,421.11 493.5,420.48 494.0,420.58 494.5,421.71 495.0,421.49 495.5,420.93 496.0,420.33 496.5,419.69 497.0,422.64 497.5,419.70 498.0,421.74 498.5,420.99 499.0,420.52 499.5,422.03 500.0,420.56 500.5,422.42 501.0,420.34 501.5,421.76 502.0,422.50 502.5,420.47 503.0,423.31 503.5,422.19 504.0,419.40 504.5,422.72 505.0,423.22 505.5,421.26 506.0,421.34 506.5,421.88 507.0,419.82 507.5,421.73 508.0,422.47 508.5,421.13 509.0,422.68 509.5,423.70 510.0,419.90 510.5,420.07 511.0,421.10 511.5,422.35 512.0,422.14 512.5,420.97 513.0,420.79 513.5,421.18 514.0,423.43 514.5,421.02 515.0,421.38 515.5,422.81 516.0,421.71 516.5,421.06 517.0,423.30 517.5,422.32 518.0,421.41 518.5,421.70 519.0,422.93 519.5,421.76 520.0,422.36 520.5,422.95 521.0,423.07 521.5,420.50 522.0,421.76 522.5,421.92 523.0,422.34 523.5,422.97 524.0,423.36 524.5,421.89 525.0,421.32 525.5,422.53 526.0,421.83 526.5,423.97 527.0,422.74 527.5,422.49 528.0,423.36 528.5,421.88 529.0,422.18 529.5,422.35 530.0,423.13 530.5,423.74 531.0,423.29 531.5,423.29 532.0,422.41 532.5,422.97 533.0,422.44 533.5,423.73 534.0,422.12 534.5,422.65 535.0,422.95 535.5,423.47 536.0,422.11 536.5,422.58 537.0,422.06 537.5,421.60 538.0,423.84 538.5,423.28 539.0,421.51 539.5,422.01 540.0,423.43 540.5,422.38 541.0,422.00 541.5,424.11 542.0,422.55 542.5,422.67 543.0,423.54 543.5,422.40 544.0,423.08 544.5,423.23 545.0,423.78 545.5,422.44 546.0,424.12 546.5,423.47 547.0,424.81 547.5,423.39 548.0,422.72 548.5,422.74 549.0,422.22 549.5,423.26 550.0,423.22 550.5,424.11 551.0,423.39 551.5,422.56 552.0,424.28 552.5,422.97 553.0,423.63 553.5,424.72 554.0,424.57 554.5,422.76 555.0,423.33 555.5,424.67 556.0,424.36 556.5,423.97 557.0,424.30 557.5,421.54 558.0,423.25 558.5,422.22 559.0,422.96 559.5,423.20 560.0,423.99 560.5,424.64 561.0,424.30 561.5,423.84 562.0,423.28 562.5,424.78 563.0,423.87 563.5,422.02 564.0,423.59 564.5,424.11 565.0,422.79 565.5,423.88 566.0,425.07 566.5,423.47 567.0,423.67 567.5,423.69 568.0,422.85 568.5,423.32 569.0,422.84 569.5,423.51 570.0,423.05 570.5,424.67 571.0,423.70 571.5,424.59 572.0,422.68 572.5,423.83 573.0,424.38 573.5,424.51 574.0,423.32 574.5,423.80 575.0,424.01 575.5,423.61 576.0,423.56 576.5,424.43 577.0,422.88 577.5,422.33 578.0,423.55 578.5,424.27 579.0,421.94 579.5,425.27 580.0,424.14 580.5,424.60 581.0,423.32 581.5,424.06 582.0,425.78 582.5,425.83 583.0,424.72 583.5,423.91 584.0,424.07 584.5,425.39 585.0,423.55 585.5,423.36 586.0,424.10 586.5,425.07 587.0,423.27 587.5,424.59 588.0,424.62 588.5,424.41 589.0,424.16 589.5,425.16 590.0,424.85 590.5,423.00 591.0,425.81 591.5,424.78 592.0,424.66 592.5,424.05 593.0,424.12 593.5,422.10 594.0,424.20 594.5,424.96 595.0,425.00 595.5,423.83 596.0,422.30 596.5,423.44 597.0,424.20 597.5,425.67 598.0,423.03 598.5,424.54 599.0,425.08 599.5,425.12 600.0,424.48 600.5,422.04 601.0,425.14 601.5,424.72 602.0,425.11 602.5,423.77 603.0,424.21 603.5,426.04 604.0,424.60 604.5,424.69 605.0,424.06 605.5,425.88 606.0,423.24 606.5,424.29 607.0,425.17 607.5,424.76 608.0,425.62 608.5,425.21 609.0,426.16 609.5,424.66 610.0,424.76 610.5,425.15 611.0,423.28 611.5,426.22 612.0,424.11 612.5,426.00 613.0,426.29 613.5,425.92 614.0,425.19 614.5,424.44 615.0,423.09 615.5,425.57 616.0,424.85 616.5,426.65 617.0,424.83 617.5,425.69 618.0,424.76 618.5,425.53 619.0,424.84 619.5,425.01 620.0,423.46 620.5,424.54 621.0,425.07 621.5,426.39 622.0,425.49 622.5,424.13 623.0,426.72 623.5,425.60 624.0,426.31 624.5,424.47 625.0,422.31 625.5,424.63 626.0,424.41 626.5,425.60 627.0,423.96 627.5,424.57 628.0,424.14 628.5,425.54 629.0,424.58 629.5,426.71 630.0,426.18" fill="none" stroke="#f0f0f0" stroke-width="1"/><path d="M629.5 425.5 L629.5 434" stroke="#f0f0f0" stroke-width="1"/></svg>
<svg style="left:216px;top:110px" width="661" height="72" viewBox="0 0 661 72"><path d="M0 68 L661 68" stroke="#858585" stroke-width="2"/><polyline points="0.0,66.99 0.5,66.99 1.0,66.99 1.5,66.99 2.0,66.99 2.5,66.99 3.0,66.99 3.5,66.99 4.0,66.99 4.5,66.99 5.0,66.99 5.5,66.99 6.0,66.99 6.5,66.99 7.0,66.99 7.5,66.99 8.0,66.99 8.5,66.99 9.0,66.99 9.5,66.99 10.0,66.99 10.5,66.99 11.0,66.99 11.5,66.99 12.0,66.99 12.5,66.99 13.0,66.99 13.5,66.99 14.0,66.99 14.5,66.49 15.0,66.85 15.5,66.85 16.0,66.47 16.5,66.46 17.0,66.24 17.5,66.93 18.0,66.22 18.5,65.62 19.0,66.04 19.5,66.33 20.0,66.25 20.5,66.79 21.0,66.73 21.5,66.84 22.0,66.27 22.5,66.84 23.0,66.55 23.5,66.31 24.0,66.79 24.5,65.41 25.0,66.39 25.5,66.37 26.0,66.56 26.5,66.58 27.0,66.87 27.5,66.88 28.0,66.31 28.5,66.73 29.0,66.44 29.5,66.98 30.0,66.28 30.5,66.73 31.0,66.64 31.5,66.74 32.0,66.98 32.5,66.67 33.0,66.89 33.5,66.40 34.0,66.99 34.5,66.99 35.0,66.99 35.5,66.99 36.0,66.99 36.5,66.99 37.0,66.99 37.5,66.99 38.0,66.99 38.5,66.99 39.0,66.99 39.5,66.99 40.0,66.99 40.5,66.99 41.0,66.99 41.5,66.99 42.0,66.99 42.5,66.99 43.0,66.99 43.5,66.99 44.0,66.99 44.5,66.99 45.0,66.99 45.5,66.99 46.0,66.99 46.5,66.99 47.0,66.99 47.5,66.99 48.0,66.99 48.5,66.99 49.0,66.99 49.5,66.99 50.0,66.99 50.5,66.99 51.0,66.99 51.5,66.99 52.0,66.99 52.5,66.99 53.0,66.99 53.5,66.99 54.0,66.99 54.5,66.99 55.0,66.98 55.5,66.98 56.0,66.98 56.5,66.98 57.0,66.98 57.5,66.98 58.0,66.98 58.5,66.98 59.0,66.98 59.5,66.29 60.0,66.36 60.5,66.27 61.0,66.91 61.5,66.72 62.0,66.44 62.5,66.60 63.0,66.62 63.5,66.41 64.0,66.76 64.5,66.59 65.0,66.74 65.5,66.45 66.0,66.57 66.5,66.83 67.0,65.50 67.5,66.52 68.0,66.67 68.5,66.32 69.0,66.11 69.5,66.39 70.0,66.57 70.5,66.60 71.0,66.49 71.5,65.27 72.0,66.54 72.5,66.64 73.0,66.94 73.5,66.16 74.0,66.89 74.5,66.91 75.0,66.88 75.5,66.22 76.0,66.16 76.5,66.63 77.0,65.66 77.5,66.97 78.0,66.60 78.5,66.72 79.0,65.77 79.5,66.39 80.0,65.79 80.5,66.88 81.0,65.88 81.5,66.68 82.0,66.72 82.5,66.89 83.0,66.74 83.5,65.96 84.0,66.16 84.5,66.59 85.0,66.54 85.5,66.89 86.0,66.85 86.5,66.58 87.0,66.72 87.5,66.83 88.0,66.76 88.5,66.66 89.0,66.71 89.5,66.42 90.0,66.92 90.5,65.51 91.0,65.65 91.5,66.58 92.0,66.76 92.5,65.79 93.0,66.61 93.5,66.45 94.0,66.53 94.5,65.69 95.0,66.81 95.5,66.89 96.0,66.49 96.5,66.93 97.0,66.42 97.5,66.01 98.0,66.17 98.5,66.02 99.0,65.94 99.5,66.48 100.0,66.74 100.5,66.05 101.0,66.62 101.5,66.63 102.0,66.04 102.5,66.85 103.0,66.70 103.5,66.09 104.0,66.84 104.5,66.21 105.0,65.93 105.5,66.89 106.0,65.85 106.5,66.53 107.0,66.95 107.5,66.25 108.0,66.07 108.5,66.72 109.0,66.65 109.5,66.15 110.0,66.47 110.5,66.50 111.0,66.86 111.5,66.97 112.0,66.56 112.5,66.90 113.0,66.11 113.5,66.85 114.0,65.66 114.5,66.10 115.0,66.17 115.5,66.67 116.0,66.14 116.5,66.56 117.0,66.47 117.5,65.73 118.0,66.34 118.5,66.80 119.0,66.66 119.5,66.11 120.0,66.42 120.5,66.06 121.0,66.55 121.5,66.53 122.0,66.39 122.5,66.00 123.0,66.50 123.5,66.44 124.0,65.98 124.5,66.40 125.0,66.17 125.5,66.76 126.0,66.45 126.5,66.60 127.0,66.56 127.5,66.26 128.0,66.84 128.5,66.75 129.0,66.97 129.5,66.97 130.0,66.97 130.5,66.97 131.0,66.97 131.5,66.97 132.0,66.97 132.5,66.97 133.0,66.97 133.5,66.97 134.0,66.97 134.5,66.97 135.0,66.97 135.5,66.97 136.0,66.97 136.5,66.97 137.0,66.97 137.5,66.97 138.0,66.97 138.5,66.97 139.0,66.97 139.5,66.97 140.0,66.97 140.5,66.97 141.0,66.97 141.5,66.97 142.0,66.97 142.5,66.97 143.0,66.97 143.5,66.97 144.0,66.97 144.5,66.97 145.0,66.97 145.5,66.97 146.0,66.97 146.5,66.97 147.0,66.97 147.5,66.97 148.0,66.97 148.5,66.97 149.0,66.97 149.5,66.97 150.0,66.97 150.5,66.97 151.0,66.97 151.5,66.97 152.0,66.97 152.5,66.97 153.0,66.97 153.5,66.97 154.0,66.97 154.5,66.97 155.0,66.97 155.5,66.97 156.0,66.97 156.5,66.97 157.0,66.97 157.5,66.97 158.0,66.97 158.5,66.97 159.0,66.97 159.5,66.97 160.0,66.97 160.5,66.97 161.0,66.97 161.5,66.97 162.0,66.97 162.5,66.97 163.0,66.97 163.5,66.97 164.0,66.97 164.5,66.97 165.0,66.97 165.5,66.97 166.0,66.97 166.5,66.97 167.0,66.97 167.5,66.97 168.0,66.96 168.5,66.96 169.0,66.96 169.5,66.96 170.0,66.96 170.5,66.96 171.0,66.96 171.5,66.96 172.0,66.96 172.5,66.96 173.0,66.96 173.5,66.96 174.0,66.96 174.5,66.96 175.0,66.96 175.5,66.96 176.0,66.96 176.5,66.96 177.0,66.96 177.5,66.96 178.0,66.96 178.5,66.96 179.0,66.96 179.5,66.96 180.0,66.96 180.5,66.96 181.0,66.96 181.5,66.96 182.0,66.96 182.5,66.96 183.0,66.96 183.5,66.96 184.0,66.96 184.5,66.96 185.0,66.96 185.5,66.96 186.0,66.96 186.5,66.96 187.0,66.96 187.5,66.96 188.0,66.96 188.5,66.96 189.0,66.96 189.5,66.96 190.0,66.96 190.5,66.96 191.0,66.96 191.5,66.96 192.0,66.96 192.5,66.96 193.0,66.96 193.5,66.95 194.0,66.95 194.5,66.95 195.0,66.95 195.5,66.95 196.0,66.95 196.5,66.95 197.0,66.95 197.5,66.95 198.0,66.95 198.5,66.95 199.0,66.95 199.5,66.95 200.0,66.95 200.5,66.95 201.0,66.95 201.5,66.95 202.0,66.95 202.5,66.95 203.0,66.95 203.5,66.95 204.0,66.95 204.5,66.95 205.0,66.95 205.5,66.95 206.0,66.95 206.5,66.95 207.0,66.95 207.5,66.95 208.0,66.95 208.5,66.95 209.0,66.95 209.5,66.95 210.0,66.95 210.5,66.95 211.0,66.95 211.5,66.94 212.0,66.94 212.5,66.94 213.0,66.94 213.5,66.94 214.0,66.94 214.5,66.94 215.0,66.94 215.5,66.94 216.0,66.94 216.5,66.94 217.0,66.94 217.5,66.94 218.0,66.94 218.5,66.94 219.0,66.94 219.5,66.94 220.0,66.94 220.5,66.94 221.0,66.94 221.5,66.94 222.0,66.94 222.5,66.94 223.0,66.94 223.5,66.94 224.0,66.94 224.5,66.94 225.0,66.94 225.5,66.93 226.0,66.93 226.5,66.93 227.0,66.93 227.5,66.93 228.0,66.93 228.5,66.93 229.0,66.93 229.5,66.93 230.0,66.93 230.5,66.93 231.0,66.93 231.5,66.93 232.0,66.93 232.5,66.93 233.0,66.93 233.5,66.93 234.0,66.93 234.5,66.93 235.0,66.93 235.5,66.93 236.0,66.92 236.5,66.92 237.0,66.92 237.5,66.92 238.0,66.92 238.5,66.92 239.0,66.92 239.5,66.92 240.0,66.92 240.5,66.92 241.0,66.92 241.5,66.92 242.0,66.92 242.5,66.92 243.0,66.92 243.5,66.92 244.0,66.92 244.5,66.92 245.0,66.91 245.5,66.91 246.0,66.91 246.5,66.91 247.0,66.91 247.5,66.91 248.0,66.91 248.5,66.91 249.0,66.91 249.5,66.91 250.0,66.91 250.5,66.91 251.0,66.91 251.5,66.91 252.0,66.91 252.5,66.90 253.0,66.90 253.5,66.90 254.0,66.90 254.5,66.90 255.0,66.90 255.5,66.90 256.0,66.90 256.5,66.90 257.0,66.90 257.5,66.90 258.0,66.90 258.5,66.90 259.0,66.89 259.5,66.89 260.0,66.89 260.5,66.89 261.0,66.89 261.5,66.89 262.0,66.89 262.5,66.89 263.0,66.89 263.5,66.89 264.0,66.89 264.5,66.88 265.0,66.88 265.5,66.88 266.0,66.88 266.5,66.88 267.0,66.88 267.5,66.88 268.0,66.88 268.5,66.88 269.0,66.88 269.5,66.87 270.0,66.87 270.5,66.87 271.0,66.87 271.5,66.87 272.0,66.87 272.5,66.87 273.0,66.87 273.5,66.86 274.0,66.86 274.5,66.86 275.0,66.86 275.5,66.86 276.0,66.86 276.5,66.86 277.0,66.86 277.5,66.85 278.0,66.85 278.5,66.85 279.0,66.85 279.5,66.85 280.0,66.85 280.5,66.85 281.0,66.84 281.5,66.84 282.0,66.84 282.5,66.84 283.0,66.84 283.5,66.84 284.0,66.83 284.5,66.83 285.0,66.83 285.5,66.83 286.0,66.83 286.5,66.83 287.0,66.82 287.5,66.82 288.0,66.82 288.5,66.82 289.0,66.82 289.5,66.81 290.0,66.81 290.5,66.81 291.0,66.81 291.5,66.81 292.0,66.80 292.5,66.80 293.0,66.80 293.5,66.80 294.0,66.80 294.5,66.79 295.0,66.79 295.5,66.79 296.0,66.79 296.5,66.78 297.0,66.78 297.5,66.78 298.0,66.78 298.5,66.77 299.0,66.77 299.5,66.77 300.0,66.76 300.5,66.76 301.0,66.76 301.5,66.76 302.0,66.75 302.5,66.75 303.0,66.75 303.5,66.74 304.0,66.74 304.5,66.74 305.0,66.73 305.5,66.73 306.0,66.73 306.5,66.72 307.0,66.72 307.5,66.72 308.0,66.71 308.5,66.71 309.0,66.70 309.5,66.70 310.0,66.70 310.5,66.69 311.0,66.69 311.5,66.68 312.0,66.68 312.5,66.67 313.0,66.67 313.5,66.66 314.0,66.66 314.5,66.65 315.0,66.65 315.5,66.64 316.0,66.64 316.5,66.63 317.0,66.63 317.5,66.62 318.0,66.62 318.5,66.61 319.0,66.60 319.5,66.60 320.0,66.59 320.5,66.59 321.0,66.58 321.5,66.57 322.0,66.57 322.5,66.56 323.0,66.55 323.5,66.54 324.0,66.54 324.5,66.13 325.0,66.49 325.5,65.42 326.0,65.94 326.5,66.44 327.0,66.29 327.5,65.63 328.0,65.72 328.5,66.23 329.0,65.45 329.5,65.36 330.0,65.89 330.5,66.09 331.0,65.30 331.5,65.95 332.0,66.34 332.5,66.15 333.0,66.12 333.5,64.95 334.0,65.99 334.5,66.16 335.0,65.82 335.5,66.14 336.0,65.98 336.5,66.09 337.0,66.15 337.5,65.79 338.0,65.54 338.5,66.00 339.0,65.52 339.5,65.72 340.0,65.82 340.5,66.07 341.0,65.17 341.5,65.59 342.0,65.88 342.5,65.22 343.0,65.70 343.5,65.87 344.0,65.43 344.5,65.82 345.0,65.76 345.5,65.23 346.0,65.64 346.5,65.72 347.0,65.34 347.5,65.40 348.0,65.68 348.5,64.39 349.0,65.37 349.5,64.66 350.0,65.32 350.5,65.49 351.0,65.19 351.5,64.78 352.0,65.06 352.5,65.28 353.0,64.59 353.5,64.65 354.0,65.10 354.5,64.86 355.0,64.64 355.5,64.27 356.0,64.41 356.5,64.34 357.0,63.17 357.5,64.56 358.0,64.39 358.5,64.13 359.0,63.70 359.5,63.98 360.0,63.37 360.5,63.67 361.0,63.48 361.5,62.86 362.0,63.14 362.5,62.24 363.0,62.16 363.5,62.56 364.0,62.43 364.5,62.26 365.0,61.87 365.5,61.23 366.0,60.76 366.5,61.19 367.0,60.65 367.5,60.22 368.0,59.68 368.5,59.08 369.0,58.03 369.5,57.51 370.0,56.63 370.5,55.38 371.0,54.95 371.5,53.67 372.0,52.00 372.5,50.80 373.0,49.22 373.5,47.20 374.0,45.40 374.5,43.37 375.0,41.02 375.5,38.28 376.0,35.08 376.5,32.87 377.0,30.02 377.5,27.38 378.0,24.22 378.5,20.77 379.0,17.51 379.5,15.13 380.0,12.53 380.5,9.94 381.0,8.06 381.5,5.82 382.0,4.59 382.5,4.27 383.0,5.21 383.5,5.63 384.0,7.24 384.5,8.80 385.0,11.50 385.5,14.15 386.0,16.23 386.5,19.79 387.0,23.09 387.5,25.09 388.0,29.18 388.5,31.99 389.0,34.52 389.5,37.28 390.0,40.12 390.5,41.83 391.0,44.27 391.5,45.71 392.0,48.55 392.5,50.25 393.0,51.10 393.5,52.24 394.0,54.00 394.5,55.40 395.0,56.29 395.5,56.92 396.0,57.94 396.5,58.97 397.0,58.76 397.5,59.01 398.0,60.12 398.5,61.07 399.0,61.33 399.5,60.68 400.0,61.88 400.5,62.20 401.0,61.37 401.5,62.52 402.0,62.76 402.5,62.77 403.0,62.72 403.5,62.87 404.0,63.26 404.5,62.92 405.0,63.97 405.5,63.65 406.0,64.22 406.5,63.51 407.0,64.30 407.5,64.15 408.0,64.43 408.5,64.64 409.0,64.45 409.5,64.76 410.0,64.25 410.5,64.53 411.0,64.71 411.5,64.05 412.0,65.05 412.5,65.26 413.0,64.98 413.5,64.53 414.0,65.01 414.5,65.13 415.0,65.39 415.5,65.01 416.0,64.66 416.5,65.51 417.0,65.54 417.5,65.48 418.0,64.48 418.5,65.40 419.0,65.62 419.5,65.13 420.0,65.74 420.5,65.53 421.0,64.46 421.5,65.07 422.0,65.02 422.5,64.41 423.0,65.13 423.5,65.77 424.0,66.02 424.5,65.39 425.0,65.96 425.5,65.35 426.0,65.35 426.5,65.92 427.0,65.95 427.5,65.95 428.0,65.18 428.5,66.02 429.0,65.42 429.5,65.91 430.0,66.18 430.5,66.21 431.0,65.76 431.5,66.15 432.0,65.99 432.5,66.24 433.0,65.28 433.5,65.44 434.0,66.34 434.5,66.40 435.0,66.32 435.5,66.10 436.0,65.47 436.5,66.45 437.0,66.34 437.5,65.85 438.0,65.47 438.5,66.08 439.0,65.50 439.5,66.43 440.0,66.13 440.5,65.94 441.0,66.29 441.5,66.00 442.0,66.11 442.5,65.83 443.0,66.51 443.5,66.35 444.0,66.58 444.5,66.58 445.0,66.59 445.5,66.60 446.0,66.60 446.5,66.61 447.0,66.61 447.5,66.62 448.0,66.63 448.5,66.63 449.0,66.64 449.5,66.64 450.0,66.65 450.5,66.65 451.0,66.66 451.5,66.66 452.0,66.67 452.5,66.67 453.0,66.68 453.5,66.68 454.0,66.69 454.5,66.69 455.0,66.69 455.5,66.70 456.0,66.70 456.5,66.71 457.0,66.71 457.5,66.71 458.0,66.72 458.5,66.72 459.0,66.73 459.5,66.73 460.0,66.73 460.5,66.74 461.0,66.74 461.5,66.74 462.0,66.75 462.5,66.75 463.0,66.75 463.5,66.75 464.0,66.76 464.5,66.76 465.0,66.76 465.5,66.77 466.0,66.77 466.5,66.77 467.0,66.77 467.5,66.78 468.0,66.78 468.5,66.78 469.0,66.78 469.5,66.79 470.0,66.79 470.5,66.79 471.0,66.79 471.5,66.80 472.0,66.80 472.5,66.80 473.0,66.80 473.5,66.81 474.0,66.81 474.5,66.56 475.0,66.63 475.5,66.68 476.0,66.55 476.5,66.26 477.0,66.44 477.5,66.39 478.0,66.33 478.5,66.47 479.0,66.73 479.5,66.81 480.0,66.82 480.5,66.31 481.0,65.79 481.5,66.02 482.0,65.81 482.5,66.04 483.0,66.45 483.5,65.99 484.0,66.58 484.5,66.71 485.0,66.19 485.5,66.06 486.0,66.12 486.5,66.56 487.0,65.78 487.5,66.70 488.0,66.75 488.5,66.00 489.0,66.48 489.5,66.31 490.0,66.12 490.5,66.66 491.0,66.73 491.5,66.50 492.0,66.64 492.5,66.52 493.0,64.78 493.5,66.63 494.0,66.06 494.5,66.20 495.0,66.67 495.5,66.65 496.0,66.34 496.5,66.18 497.0,66.39 497.5,65.49 498.0,66.24 498.5,66.41 499.0,66.41 499.5,65.58 500.0,66.40 500.5,66.12 501.0,66.78 501.5,65.65 502.0,65.91 502.5,66.87 503.0,65.60 503.5,66.33 504.0,66.89 504.5,66.89 505.0,66.89 505.5,66.89 506.0,66.89 506.5,66.90 507.0,66.90 507.5,66.90 508.0,66.90 508.5,66.90 509.0,66.90 509.5,66.90 510.0,66.90 510.5,66.90 511.0,66.90 511.5,66.90 512.0,66.90 512.5,66.90 513.0,66.91 513.5,66.91 514.0,66.91 514.5,66.91 515.0,66.91 515.5,66.91 516.0,66.91 516.5,66.91 517.0,66.91 517.5,66.91 518.0,66.91 518.5,66.91 519.0,66.91 519.5,66.91 520.0,66.91 520.5,66.92 521.0,66.92 521.5,66.92 522.0,66.92 522.5,66.92 523.0,66.92 523.5,66.92 524.0,66.92 524.5,66.92 525.0,66.92 525.5,66.92 526.0,66.92 526.5,66.92 527.0,66.92 527.5,66.92 528.0,66.92 528.5,66.92 529.0,66.92 529.5,66.93 530.0,66.93 530.5,66.93 531.0,66.93 531.5,66.93 532.0,66.93 532.5,66.93 533.0,66.93 533.5,66.93 534.0,66.93 534.5,66.93 535.0,66.93 535.5,66.93 536.0,66.93 536.5,66.93 537.0,66.93 537.5,66.93 538.0,66.93 538.5,66.93 539.0,66.93 539.5,66.93 540.0,66.93 540.5,66.94 541.0,66.94 541.5,66.94 542.0,66.94 542.5,66.94 543.0,66.94 543.5,66.94 544.0,66.94 544.5,66.94 545.0,66.94 545.5,66.94 546.0,66.94 546.5,66.94 547.0,66.94 547.5,66.94 548.0,66.94 548.5,66.94 549.0,66.94 549.5,66.94 550.0,66.94 550.5,66.94 551.0,66.94 551.5,66.94 552.0,66.94 552.5,66.94 553.0,66.94 553.5,66.94 554.0,66.95 554.5,66.95 555.0,66.95 555.5,66.95 556.0,66.95 556.5,66.95 557.0,66.95 557.5,66.95 558.0,66.95 558.5,66.95 559.0,66.95 559.5,66.95 560.0,66.95 560.5,66.95 561.0,66.95 561.5,66.95 562.0,66.95 562.5,66.95 563.0,66.95 563.5,66.95 564.0,66.95 564.5,66.95 565.0,66.95 565.5,66.95 566.0,66.95 566.5,66.95 567.0,66.95 567.5,66.95 568.0,66.95 568.5,66.95 569.0,66.95 569.5,66.95 570.0,66.95 570.5,66.95 571.0,66.95 571.5,66.95 572.0,66.96 572.5,66.96 573.0,66.96 573.5,66.96 574.0,66.96 574.5,66.96 575.0,66.96 575.5,66.96 576.0,66.96 576.5,66.96 577.0,66.96 577.5,66.96 578.0,66.96 578.5,66.96 579.0,66.96 579.5,66.96 580.0,66.96 580.5,66.96 581.0,66.96 581.5,66.96 582.0,66.96 582.5,66.96 583.0,66.96 583.5,66.96 584.0,66.96 584.5,66.96 585.0,66.96 585.5,66.96 586.0,66.96 586.5,66.96 587.0,66.96 587.5,66.96 588.0,66.96 588.5,66.96 589.0,66.96 589.5,66.96 590.0,66.96 590.5,66.96 591.0,66.96 591.5,66.96 592.0,66.96 592.5,66.96 593.0,66.96 593.5,66.96 594.0,66.96 594.5,66.36 595.0,66.49 595.5,66.47 596.0,66.61 596.5,66.81 597.0,66.32 597.5,66.26 598.0,66.94 598.5,66.86 599.0,66.70 599.5,66.11 600.0,66.92 600.5,66.67 601.0,65.85 601.5,65.92 602.0,66.31 602.5,65.75 603.0,66.74 603.5,66.80 604.0,66.37 604.5,66.72 605.0,66.92 605.5,65.90 606.0,66.54 606.5,65.29 607.0,65.78 607.5,66.07 608.0,66.95 608.5,66.75 609.0,66.74 609.5,66.51 610.0,66.64 610.5,66.01 611.0,66.51 611.5,66.79 612.0,66.74 612.5,66.35 613.0,66.24 613.5,66.61 614.0,66.51 614.5,66.91 615.0,66.87 615.5,66.53 616.0,66.84 616.5,66.87 617.0,66.64 617.5,66.35 618.0,66.39 618.5,65.70 619.0,66.59 619.5,66.83 620.0,66.15 620.5,66.55 621.0,66.60 621.5,66.21 622.0,66.67 622.5,66.69 623.0,66.92 623.5,66.66 624.0,66.84 624.5,66.68 625.0,65.61 625.5,66.06 626.0,66.74 626.5,66.92 627.0,65.71 627.5,66.94 628.0,66.42 628.5,66.26 629.0,66.13 629.5,66.85 630.0,65.96 630.5,66.73 631.0,66.78 631.5,66.73 632.0,66.60 632.5,66.70 633.0,66.96 633.5,66.34 634.0,66.29 634.5,66.66 635.0,66.90 635.5,66.18 636.0,66.01 636.5,66.61 637.0,66.66 637.5,66.51 638.0,65.50 638.5,66.82 639.0,66.84 639.5,66.35 640.0,66.16 640.5,66.64 641.0,66.52 641.5,66.51 642.0,65.96 642.5,66.78 643.0,66.69 643.5,66.81 644.0,66.64 644.5,66.09 645.0,66.46 645.5,66.26 646.0,66.79 646.5,66.63 647.0,66.67 647.5,66.94 648.0,66.95 648.5,66.94 649.0,65.96 649.5,65.76 650.0,65.76 650.5,66.27 651.0,66.66 651.5,66.30 652.0,66.92 652.5,66.82 653.0,66.11 653.5,66.85 654.0,66.05 654.5,66.12 655.0,66.80 655.5,66.46 656.0,65.77 656.5,65.70 657.0,66.12 657.5,66.91 658.0,66.24 658.5,66.81 659.0,66.50 659.5,65.87 660.0,66.47 660.5,66.55 661.0,66.98" fill="none" stroke="#e8e8e8" stroke-width="0.9"/></svg>
<div style="position:absolute;left:216px;top:182px;width:661px;height:21px;background:#ece9d8"></div>
<div style="position:absolute;left:216px;top:203px;width:661px;height:2px;background:#e4f2ee"></div>
<div style="position:absolute;left:216px;top:182px;width:1px;height:22px;background:#f4fbf8"></div>
<div class="b" style="position:absolute;left:218px;top:182px;width:19px;height:21px;"></div>
<div class="b" style="position:absolute;left:238px;top:182px;width:19px;height:21px;"></div>
<div class="b" style="position:absolute;left:259px;top:182px;width:19px;height:21px;"></div>
<div class="b" style="position:absolute;left:279px;top:182px;width:19px;height:21px;"></div>
<div class="b" style="position:absolute;left:300px;top:182px;width:19px;height:21px;"></div>
<div class="b" style="position:absolute;left:321px;top:182px;width:18px;height:21px;"></div>
<div class="b" style="position:absolute;left:340px;top:182px;width:19px;height:21px;"></div>
<div class="b" style="position:absolute;left:360px;top:182px;width:19px;height:21px;"></div>
<div class="b" style="position:absolute;left:381px;top:182px;width:19px;height:21px;"></div>
<div class="b" style="position:absolute;left:414px;top:182px;width:20px;height:21px;"></div>
<div class="b" style="position:absolute;left:434px;top:182px;width:20px;height:21px;"></div>
<div class="b" style="position:absolute;left:454px;top:182px;width:20px;height:21px;"></div>
<div class="bp" style="position:absolute;left:475px;top:182px;width:20px;height:21px;"></div>
<div class="b" style="position:absolute;left:496px;top:182px;width:20px;height:21px;"></div>
<div class="b" style="position:absolute;left:517px;top:182px;width:20px;height:21px;"></div>
<div class="b" style="position:absolute;left:538px;top:182px;width:19px;height:21px;"></div>
<div class="b" style="position:absolute;left:558px;top:182px;width:19px;height:21px;"></div>
<div class="b" style="position:absolute;left:578px;top:182px;width:19px;height:21px;"></div>
<div class="b" style="position:absolute;left:597px;top:182px;width:19px;height:21px;"></div>
<div class="b" style="position:absolute;left:617px;top:182px;width:20px;height:21px;"></div>
<div class="bp" style="position:absolute;left:638px;top:182px;width:20px;height:21px;"></div>
<div class="b" style="position:absolute;left:659px;top:182px;width:19px;height:21px;"></div>
<div class="b" style="position:absolute;left:692px;top:182px;width:20px;height:21px;"></div>
<div class="b" style="position:absolute;left:713px;top:182px;width:19px;height:21px;"></div>
<div class="b" style="position:absolute;left:733px;top:182px;width:20px;height:21px;"></div>
<div class="b" style="position:absolute;left:755px;top:182px;width:19px;height:21px;"></div>
<div class="b" style="position:absolute;left:775px;top:182px;width:19px;height:21px;"></div>
<div class="b" style="position:absolute;left:796px;top:182px;width:19px;height:21px;"></div>
<div class="b" style="position:absolute;left:816px;top:182px;width:19px;height:21px;"></div>
<div class="b" style="position:absolute;left:836px;top:182px;width:20px;height:21px;"></div>
<div class="b" style="position:absolute;left:857px;top:182px;width:20px;height:21px;"></div>
<div style="position:absolute;left:402px;top:183px;width:12px;height:19px;border-bottom:1px solid #aca899"></div>
<div style="position:absolute;left:680px;top:183px;width:11px;height:19px;border-right:1px solid #fff;border-left:1px solid #d8d4c4"></div>
<svg style="left:220.5px;top:185.5px" width="14" height="14" viewBox="0 0 16 16"><circle cx="8" cy="8" r="7.5" fill="#0c6a14" stroke="#063008" stroke-width="1"/><path d="M5.3 6.2 C5.3 3.6 10.7 3.6 10.7 6.2 C10.7 7.8 8.1 8 8.1 9.8" stroke="#d8f8d0" stroke-width="2" fill="none"/><rect x="7" y="11" width="2.2" height="2.2" fill="#d8f8d0"/></svg>
<svg style="left:241px;top:186px" width="14" height="14" viewBox="0 0 14 14"><path d="M4.5 1 L9.5 1 L13 4.5 L13 9.5 L9.5 13 L4.5 13 L1 9.5 L1 4.5 Z" fill="#8a8a8a" stroke="#444"/><path d="M4 4 L10 10 M10 4 L4 10" stroke="#c8c8c8" stroke-width="1.3"/></svg>
<svg style="left:260px;top:186px" width="17" height="13" viewBox="0 0 17 13"><rect x="2" y="5" width="13" height="3" fill="#b4b1a4"/></svg>
<svg style="left:281px;top:185px" width="15" height="15" viewBox="0 0 15 15"><path d="M1 7.5 L14 7.5 M7.5 1 L7.5 14" stroke="#b4b1a4" stroke-width="3"/></svg>
<svg style="left:301px;top:185px" width="17" height="15" viewBox="0 0 17 15"><path d="M1 7.5 L6 3 L6 12 Z M16 7.5 L11 3 L11 12 Z" fill="#b4b1a4"/><path d="M8.5 2 L8.5 13" stroke="#cfccc0"/></svg>
<svg style="left:322px;top:185px" width="16" height="15" viewBox="0 0 16 15"><path d="M8 1 L13 6 L3 6 Z M3 9 L13 9 L8 14 Z" fill="#b4b1a4"/></svg>
<svg style="left:342px;top:185px" width="16" height="15" viewBox="0 0 16 15"><path d="M8 1 L13 6 L3 6 Z M3 9 L13 9 L8 14 Z" fill="#b4b1a4"/><path d="M3 7.5 L13 7.5" stroke="#b4b1a4"/></svg>
<svg style="left:362px;top:185px" width="16" height="15" viewBox="0 0 16 15"><path d="M4 3 L12 3 L12 7 M12 12 L4 12 L4 8" stroke="#b4b1a4" stroke-width="2" fill="none"/></svg>
<svg style="left:383px;top:185px" width="16" height="15" viewBox="0 0 16 15"><path d="M8 1 L13 6 L3 6 Z M3 9 L13 9 L8 14 Z" fill="#b4b1a4"/></svg>
<svg style="left:416px;top:185px" width="17" height="16" viewBox="0 0 17 16"><path d="M2 1 L2 12 L5 9 L8 14 L9 13 L7 8 L11 8 Z" fill="#fff" stroke="#000"/><text x="10" y="15" font-family="Liberation Sans" font-size="9" fill="#000">z</text></svg>
<svg style="left:436px;top:185px" width="16" height="16" viewBox="0 0 16 16"><circle cx="6.5" cy="6.5" r="4.5" fill="none" stroke="#000" stroke-width="1.4"/><path d="M10 10 L14 14" stroke="#000" stroke-width="2"/></svg>
<svg style="left:456px;top:184px" width="17" height="17" viewBox="0 0 17 17"><path d="M1 3 L16 3" stroke="#1a2ab0" stroke-width="1.3"/><path d="M8 1 L8 16" stroke="#1a2ab0" stroke-width="1.3"/><path d="M2 16 L6 4 L9 13 L12 5 L16 16" stroke="#222" fill="none"/></svg>
<svg style="left:477px;top:185px" width="17" height="15" viewBox="0 0 17 15"><path d="M1 14 L3 9 L5 4 L7 10 L9 11 L11 3 L13 10 L16 14 Z" fill="#1a1aa0"/></svg>
<svg style="left:498px;top:184px" width="17" height="17" viewBox="0 0 17 17"><text x="8.5" y="8" font-family="Liberation Sans" font-size="8" text-anchor="middle" fill="#111">B.E</text><path d="M1 12 L16 12" stroke="#1a2ab0" stroke-width="1.5"/><path d="M3 10 L5 12 L3 14 M14 10 L12 12 L14 14" stroke="#1a2ab0" fill="none"/></svg>
<svg style="left:519px;top:184px" width="17" height="17" viewBox="0 0 17 17"><text x="8.5" y="8" font-family="Liberation Sans" font-size="8" text-anchor="middle" fill="#111">D.E</text><path d="M1 12 L16 12" stroke="#1a2ab0" stroke-width="1.5"/><path d="M3 10 L5 12 L3 14 M14 10 L12 12 L14 14" stroke="#1a2ab0" fill="none"/></svg>
<svg style="left:539px;top:185px" width="17" height="15" viewBox="0 0 17 15"><path d="M1 14 L5 2 L8 12 L11 3 L15 14 M3 14 L6 6 L9 14" stroke="#222" fill="none"/></svg>
<svg style="left:559px;top:185px" width="18" height="15" viewBox="0 0 18 15"><text x="1" y="12" font-family="Liberation Sans" font-size="10" fill="#111">Kα</text></svg>
<svg style="left:580px;top:184px" width="16" height="17" viewBox="0 0 16 17"><text x="8" y="11" font-family="Liberation Sans" font-size="12" font-weight="bold" text-anchor="middle" fill="#000">C</text><path d="M2 15 L4 15 M6 15 L8 15 M10 15 L14 15" stroke="#111" stroke-width="1.5"/></svg>
<svg style="left:599px;top:185px" width="16" height="15" viewBox="0 0 16 15"><path d="M1 14 L5 2 L8 12 L11 4 M13 2 L13 14 M11 4 L13 2 L15 4 M11 12 L13 14 L15 12" stroke="#b4b1a4" fill="none"/></svg>
<svg style="left:619px;top:185px" width="17" height="15" viewBox="0 0 17 15"><path d="M1 14 L12 14 M3 14 L3 6 M6 14 L6 3 M9 14 L9 8 M14 2 L14 14 M12 4 L14 2 L16 4 M12 12 L14 14 L16 12" stroke="#b4b1a4" fill="none"/></svg>
<svg style="left:641px;top:186px" width="15" height="14" viewBox="0 0 15 14"><rect x="0.5" y="0.5" width="14" height="13" fill="#000" stroke="#333"/><path d="M7.5 1 L7.5 13 M1 7 L14 7" stroke="#30c8d0" stroke-width="1.3"/></svg>
<svg style="left:661.5px;top:185.5px" width="14" height="14" viewBox="0 0 16 16"><circle cx="8" cy="8" r="7.5" fill="#0c6a14" stroke="#063008" stroke-width="1"/><path d="M5.3 6.2 C5.3 3.6 10.7 3.6 10.7 6.2 C10.7 7.8 8.1 8 8.1 9.8" stroke="#d8f8d0" stroke-width="2" fill="none"/><rect x="7" y="11" width="2.2" height="2.2" fill="#d8f8d0"/></svg>
<svg style="left:694px;top:185px" width="16" height="15" viewBox="0 0 16 15"><path d="M8 1 L13 6 L3 6 Z M3 9 L13 9 L8 14 Z" fill="#a8a598"/></svg>
<svg style="left:715px;top:185px" width="16" height="15" viewBox="0 0 16 15"><path d="M8 1 L13 6 L3 6 Z M3 9 L13 9 L8 14 Z" fill="#a8a598"/></svg>
<svg style="left:735px;top:185px" width="16" height="15" viewBox="0 0 16 15"><path d="M1 7.5 L6 3 L6 12 Z M15 7.5 L10 3 L10 12 Z" fill="#a8a598"/></svg>
<svg style="left:757px;top:185px" width="16" height="15" viewBox="0 0 16 15"><path d="M1 7.5 L5 3 L5 12 Z M8 7.5 L4 3 L4 12 Z M15 7.5 L11 3 L11 12 Z M8 7.5 L12 3 L12 12 Z" fill="#a8a598"/></svg>
<svg style="left:777px;top:185px" width="16" height="15" viewBox="0 0 16 15"><path d="M1 5 L15 5 M1 10 L15 10" stroke="#a8a598" stroke-width="1.5"/><path d="M8 2 L8 13" stroke="#a8a598" stroke-width="2"/></svg>
<svg style="left:798px;top:185px" width="16" height="15" viewBox="0 0 16 15"><path d="M1 14 L15 14 M4 14 L4 7 M7 14 L7 3 M10 14 L10 5 M13 14 L13 9" stroke="#a8a598" stroke-width="1.5"/></svg>
<svg style="left:818px;top:185.5px" width="14" height="14" viewBox="0 0 16 16"><circle cx="8" cy="8" r="7" fill="#9a9aa0" stroke="#555" stroke-width="1"/><circle cx="8" cy="8" r="2" fill="none" stroke="#333"/></svg>
<svg style="left:839px;top:185.5px" width="14" height="14" viewBox="0 0 16 16"><circle cx="8" cy="8" r="7" fill="#8a8a8e" stroke="#555" stroke-width="1"/><path d="M5 5 L11 11 M11 5 L5 11" stroke="#bbb" stroke-width="1.5"/></svg>
<svg style="left:860px;top:185.5px" width="14" height="14" viewBox="0 0 16 16"><circle cx="8" cy="8" r="7.5" fill="#0c6a14" stroke="#063008" stroke-width="1"/><path d="M5.3 6.2 C5.3 3.6 10.7 3.6 10.7 6.2 C10.7 7.8 8.1 8 8.1 9.8" stroke="#d8f8d0" stroke-width="2" fill="none"/><rect x="7" y="11" width="2.2" height="2.2" fill="#d8f8d0"/></svg>
<div style="position:absolute;left:249px;top:206px;width:220px;height:12px;background:#ffffe1"></div>
<div style="position:absolute;left:251.50px;top:206.09px;white-space:pre;font-family:'Liberation Sans',sans-serif;font-size:11px;line-height:13.20px;color:#000;transform:scaleX(0.8434);transform-origin:0 0;">L-Drag to Paint, L-Drag Over to Erase Existing Paint</div>
<div style="position:absolute;left:264px;top:230px;width:137px;height:146px;border:1px solid #9a9a9a;box-shadow:inset 0 0 0 1px #3a3a3a, inset 0 0 0 2px #d8d8d8"></div>
<div style="position:absolute;left:286.28px;top:236.30px;white-space:pre;font-family:'Liberation Sans',sans-serif;font-size:13px;line-height:15.60px;color:#84d4cc;transform:scaleX(0.7121);transform-origin:0 0;letter-spacing:1.2px;">Centroid-A:</div>
<div style="position:absolute;left:348.30px;top:236.30px;white-space:pre;font-family:'Liberation Sans',sans-serif;font-size:13px;line-height:15.60px;color:#84d4cc;transform:scaleX(0.7239);transform-origin:0 0;letter-spacing:1.2px;">26.457</div>
<div style="position:absolute;left:287.51px;top:251.25px;white-space:pre;font-family:'Liberation Sans',sans-serif;font-size:13px;line-height:15.60px;color:#84d4cc;transform:scaleX(0.7094);transform-origin:0 0;letter-spacing:1.2px;">Centroid-d:</div>
<div style="position:absolute;left:348.30px;top:251.25px;white-space:pre;font-family:'Liberation Sans',sans-serif;font-size:13px;line-height:15.60px;color:#84d4cc;transform:scaleX(0.7239);transform-origin:0 0;letter-spacing:1.2px;">3.3661</div>
<div style="position:absolute;left:289.97px;top:266.20px;white-space:pre;font-family:'Liberation Sans',sans-serif;font-size:13px;line-height:15.60px;color:#84d4cc;transform:scaleX(0.7038);transform-origin:0 0;letter-spacing:1.2px;">Left Angle:</div>
<div style="position:absolute;left:348.30px;top:266.20px;white-space:pre;font-family:'Liberation Sans',sans-serif;font-size:13px;line-height:15.60px;color:#84d4cc;transform:scaleX(0.7239);transform-origin:0 0;letter-spacing:1.2px;">23.046</div>
<div style="position:absolute;left:282.56px;top:281.15px;white-space:pre;font-family:'Liberation Sans',sans-serif;font-size:13px;line-height:15.60px;color:#84d4cc;transform:scaleX(0.7093);transform-origin:0 0;letter-spacing:1.2px;">Right Angle:</div>
<div style="position:absolute;left:348.30px;top:281.15px;white-space:pre;font-family:'Liberation Sans',sans-serif;font-size:13px;line-height:15.60px;color:#84d4cc;transform:scaleX(0.7239);transform-origin:0 0;letter-spacing:1.2px;">29.251</div>
<div style="position:absolute;left:282.57px;top:296.10px;white-space:pre;font-family:'Liberation Sans',sans-serif;font-size:13px;line-height:15.60px;color:#84d4cc;transform:scaleX(0.7093);transform-origin:0 0;letter-spacing:1.2px;">Left Counts:</div>
<div style="position:absolute;left:348.30px;top:296.10px;white-space:pre;font-family:'Liberation Sans',sans-serif;font-size:13px;line-height:15.60px;color:#84d4cc;transform:scaleX(0.7219);transform-origin:0 0;letter-spacing:1.2px;">304.0</div>
<div style="position:absolute;left:275.16px;top:311.05px;white-space:pre;font-family:'Liberation Sans',sans-serif;font-size:13px;line-height:15.60px;color:#84d4cc;transform:scaleX(0.7137);transform-origin:0 0;letter-spacing:1.2px;">Right Counts:</div>
<div style="position:absolute;left:348.30px;top:311.05px;white-space:pre;font-family:'Liberation Sans',sans-serif;font-size:13px;line-height:15.60px;color:#84d4cc;transform:scaleX(0.7219);transform-origin:0 0;letter-spacing:1.2px;">286.0</div>
<div style="position:absolute;left:273.31px;top:326.00px;white-space:pre;font-family:'Liberation Sans',sans-serif;font-size:13px;line-height:15.60px;color:#84d4cc;transform:scaleX(0.7168);transform-origin:0 0;letter-spacing:1.2px;">Area(Counts):</div>
<div style="position:absolute;left:348.30px;top:326.00px;white-space:pre;font-family:'Liberation Sans',sans-serif;font-size:13px;line-height:15.60px;color:#84d4cc;transform:scaleX(0.7333);transform-origin:0 0;letter-spacing:1.2px;">336336</div>
<div style="position:absolute;left:278.86px;top:340.95px;white-space:pre;font-family:'Liberation Sans',sans-serif;font-size:13px;line-height:15.60px;color:#84d4cc;transform:scaleX(0.7164);transform-origin:0 0;letter-spacing:1.2px;">Peak Height:</div>
<div style="position:absolute;left:348.30px;top:340.95px;white-space:pre;font-family:'Liberation Sans',sans-serif;font-size:13px;line-height:15.60px;color:#84d4cc;transform:scaleX(0.7333);transform-origin:0 0;letter-spacing:1.2px;">9955</div>
<div style="position:absolute;left:276.42px;top:355.90px;white-space:pre;font-family:'Liberation Sans',sans-serif;font-size:13px;line-height:15.60px;color:#84d4cc;transform:scaleX(0.7401);transform-origin:0 0;letter-spacing:1.2px;">Peak FWHM:</div>
<div style="position:absolute;left:348.30px;top:355.90px;white-space:pre;font-family:'Liberation Sans',sans-serif;font-size:13px;line-height:15.60px;color:#84d4cc;transform:scaleX(0.7219);transform-origin:0 0;letter-spacing:1.2px;">0.488</div>
<div class="b" style="position:absolute;left:878px;top:460px;width:17px;height:11px;"></div>
<div class="b" style="position:absolute;left:878px;top:471px;width:17px;height:19px;"></div>
<div class="b" style="position:absolute;left:878px;top:490px;width:17px;height:19px;"></div>
<div class="b" style="position:absolute;left:878px;top:509px;width:17px;height:19px;"></div>
<div class="b" style="position:absolute;left:878px;top:528px;width:17px;height:18px;"></div>
<div class="b" style="position:absolute;left:878px;top:546px;width:17px;height:19px;"></div>
<div class="b" style="position:absolute;left:878px;top:565px;width:17px;height:18px;"></div>
<div class="b" style="position:absolute;left:878px;top:583px;width:17px;height:18px;"></div>
<div class="b" style="position:absolute;left:878px;top:601px;width:17px;height:19px;"></div>
<div class="b" style="position:absolute;left:878px;top:620px;width:17px;height:19px;"></div>
<svg style="left:880px;top:462px" width="13" height="8" viewBox="0 0 13 8"><path d="M1 6 L12 6 M2 5 L4 2 L6 5 L8 2 L10 5" stroke="#555" fill="none"/></svg>
<svg style="left:879.5px;top:473.5px" width="14" height="14" viewBox="0 0 16 16"><circle cx="8" cy="8" r="7.5" fill="#0c6a14" stroke="#063008" stroke-width="1"/><path d="M5.3 6.2 C5.3 3.6 10.7 3.6 10.7 6.2 C10.7 7.8 8.1 8 8.1 9.8" stroke="#d8f8d0" stroke-width="2" fill="none"/><rect x="7" y="11" width="2.2" height="2.2" fill="#d8f8d0"/></svg>
<svg style="left:880px;top:492px" width="13" height="15" viewBox="0 0 13 15"><path d="M6.5 1 L6.5 14 M1 7.5 L12 7.5" stroke="#1a2ab0" stroke-width="2"/><path d="M1 7.5 L4 5 L4 10 Z M12 7.5 L9 5 L9 10 Z M6.5 1 L4 4 L9 4 Z M6.5 14 L4 11 L9 11 Z" fill="#000"/></svg>
<svg style="left:880px;top:511px" width="13" height="15" viewBox="0 0 13 15"><path d="M1 5 L5 2 L5 8 Z M12 5 L8 2 L8 8 Z" fill="#1a2ab0"/><path d="M1 5 L12 5" stroke="#1a2ab0" stroke-width="1.5"/><path d="M1 11 L12 11" stroke="#000" stroke-width="2"/></svg>
<svg style="left:880px;top:530px" width="13" height="15" viewBox="0 0 13 15"><path d="M2 8 L6.5 3 L11 8 M2 12 L6.5 7 L11 12" stroke="#9a40c0" stroke-width="1.6" fill="none"/></svg>
<svg style="left:880px;top:548px" width="13" height="15" viewBox="0 0 13 15"><path d="M1 2 L12 2" stroke="#000"/><path d="M6.5 4 L11 9 L8 9 L8 14 L5 14 L5 9 L2 9 Z" fill="#000"/></svg>
<svg style="left:880px;top:566px" width="13" height="15" viewBox="0 0 13 15"><path d="M6.5 1 L11 6 L2 6 Z M2 9 L11 9 L6.5 14 Z" fill="#000"/><path d="M6.5 5 L6.5 10" stroke="#000" stroke-width="2"/></svg>
<svg style="left:880px;top:584px" width="13" height="15" viewBox="0 0 13 15"><path d="M1 7.5 L6 3 L6 12 Z M12 7.5 L7 3 L7 12 Z" fill="#000"/><path d="M3 7.5 L10 7.5" stroke="#000" stroke-width="2"/></svg>
<svg style="left:880px;top:603px" width="13" height="15" viewBox="0 0 13 15"><path d="M1 7.5 L5.5 3 L5.5 12 Z M12 7.5 L7.5 3 L7.5 12 Z" fill="#1a2ab0"/></svg>
<svg style="left:880px;top:622px" width="13" height="15" viewBox="0 0 13 15"><rect x="3" y="4" width="7" height="7" fill="#000"/></svg>
<div style="position:absolute;left:0px;top:656px;width:896px;height:15px;background:#ece9d8;border-top:1px solid #d8d4c4"></div>
<div style="position:absolute;left:0px;top:657px;width:1px;height:14px;background:#9d9a8a"></div>
<div style="position:absolute;left:13.62px;top:657.59px;white-space:pre;font-family:'Liberation Sans',sans-serif;font-size:11px;line-height:13.20px;color:#111;transform:scaleX(0.8550);transform-origin:0 0;">Raw Pattern</div>
<div style="position:absolute;left:82px;top:657px;width:1px;height:14px;background:#9d9a8a"></div>
<div style="position:absolute;left:106.01px;top:657.59px;white-space:pre;font-family:'Liberation Sans',sans-serif;font-size:11px;line-height:13.20px;color:#111;transform:scaleX(0.8550);transform-origin:0 0;">0 Peaks</div>
<div style="position:absolute;left:165px;top:657px;width:1px;height:14px;background:#9d9a8a"></div>
<div style="position:absolute;left:177.38px;top:657.59px;white-space:pre;font-family:'Liberation Sans',sans-serif;font-size:11px;line-height:13.20px;color:#111;transform:scaleX(0.8550);transform-origin:0 0;">2T=15.371</div>
<div style="position:absolute;left:235px;top:657px;width:1px;height:14px;background:#9d9a8a"></div>
<div style="position:absolute;left:251.26px;top:657.59px;white-space:pre;font-family:'Liberation Sans',sans-serif;font-size:11px;line-height:13.20px;color:#111;transform:scaleX(0.8550);transform-origin:0 0;">d=5.7598</div>
<div style="position:absolute;left:307px;top:657px;width:1px;height:14px;background:#9d9a8a"></div>
<div style="position:absolute;left:326.99px;top:657.59px;white-space:pre;font-family:'Liberation Sans',sans-serif;font-size:11px;line-height:13.20px;color:#111;transform:scaleX(0.8550);transform-origin:0 0;">I=3837</div>
<div style="position:absolute;left:377px;top:657px;width:1px;height:14px;background:#9d9a8a"></div>
<div style="position:absolute;left:385.28px;top:657.59px;white-space:pre;font-family:'Liberation Sans',sans-serif;font-size:11px;line-height:13.20px;color:#111;transform:scaleX(0.8550);transform-origin:0 0;">Two-Theta</div>
<div style="position:absolute;left:452px;top:657px;width:27px;height:14px;border:1px solid;border-color:#d0ccbc #fff #fff #d0ccbc"></div>
<div style="position:absolute;left:456.44px;top:657.59px;white-space:pre;font-family:'Liberation Sans',sans-serif;font-size:11px;line-height:13.20px;color:#c4c0b0;transform:scaleX(0.8550);transform-origin:0 0;">SAV</div>
<div style="position:absolute;left:479px;top:657px;width:27px;height:14px;border:1px solid;border-color:#d0ccbc #fff #fff #d0ccbc"></div>
<div style="position:absolute;left:483.09px;top:657.59px;white-space:pre;font-family:'Liberation Sans',sans-serif;font-size:11px;line-height:13.20px;color:#c4c0b0;transform:scaleX(0.8550);transform-origin:0 0;">PKS</div>
<div style="position:absolute;left:506px;top:657px;width:27px;height:14px;border:1px solid;border-color:#d0ccbc #fff #fff #d0ccbc"></div>
<div style="position:absolute;left:509.83px;top:657.59px;white-space:pre;font-family:'Liberation Sans',sans-serif;font-size:11px;line-height:13.20px;color:#c4c0b0;transform:scaleX(0.8550);transform-origin:0 0;">DSP</div>
<div style="position:absolute;left:534px;top:657px;width:27px;height:14px;border:1px solid;border-color:#d0ccbc #fff #fff #d0ccbc"></div>
<div style="position:absolute;left:538.09px;top:657.59px;white-space:pre;font-family:'Liberation Sans',sans-serif;font-size:11px;line-height:13.20px;color:#c4c0b0;transform:scaleX(0.8550);transform-origin:0 0;">PDF</div>
<div style="position:absolute;left:561px;top:657px;width:27px;height:14px;border:1px solid;border-color:#d0ccbc #fff #fff #d0ccbc"></div>
<div style="position:absolute;left:565.62px;top:657.59px;white-space:pre;font-family:'Liberation Sans',sans-serif;font-size:11px;line-height:13.20px;color:#c4c0b0;transform:scaleX(0.8550);transform-origin:0 0;">PFT</div>
<div style="position:absolute;left:588px;top:657px;width:27px;height:14px;border:1px solid;border-color:#d0ccbc #fff #fff #d0ccbc"></div>
<div style="position:absolute;left:592.09px;top:657.59px;white-space:pre;font-family:'Liberation Sans',sans-serif;font-size:11px;line-height:13.20px;color:#c4c0b0;transform:scaleX(0.8550);transform-origin:0 0;">RPT</div>
<div style="position:absolute;left:616px;top:657px;width:27px;height:14px;border:1px solid;border-color:#d0ccbc #fff #fff #d0ccbc"></div>
<div style="position:absolute;left:621.66px;top:657.59px;white-space:pre;font-family:'Liberation Sans',sans-serif;font-size:11px;line-height:13.20px;color:#c4c0b0;transform:scaleX(0.8550);transform-origin:0 0;">PID</div>
<div style="position:absolute;left:643px;top:657px;width:27px;height:14px;border:1px solid;border-color:#d0ccbc #fff #fff #d0ccbc"></div>
<div style="position:absolute;left:647.35px;top:657.59px;white-space:pre;font-family:'Liberation Sans',sans-serif;font-size:11px;line-height:13.20px;color:#c4c0b0;transform:scaleX(0.8550);transform-origin:0 0;">SZS</div>
<div style="position:absolute;left:671px;top:657px;width:27px;height:14px;border:1px solid;border-color:#d0ccbc #fff #fff #d0ccbc"></div>
<div style="position:absolute;left:676.92px;top:657.59px;white-space:pre;font-family:'Liberation Sans',sans-serif;font-size:11px;line-height:13.20px;color:#c4c0b0;transform:scaleX(0.8550);transform-origin:0 0;">KSI</div>
<div style="position:absolute;left:698px;top:657px;width:27px;height:14px;border:1px solid;border-color:#d0ccbc #fff #fff #d0ccbc"></div>
<div style="position:absolute;left:704.45px;top:657.59px;white-space:pre;font-family:'Liberation Sans',sans-serif;font-size:11px;line-height:13.20px;color:#c4c0b0;transform:scaleX(0.8550);transform-origin:0 0;">FIT</div>
<div style="position:absolute;left:725px;top:657px;width:27px;height:14px;border:1px solid;border-color:#d0ccbc #fff #fff #d0ccbc"></div>
<div style="position:absolute;left:729.62px;top:657.59px;white-space:pre;font-family:'Liberation Sans',sans-serif;font-size:11px;line-height:13.20px;color:#c4c0b0;transform:scaleX(0.8550);transform-origin:0 0;">2TH</div>
<div style="position:absolute;left:753px;top:657px;width:27px;height:14px;border:1px solid;border-color:#d0ccbc #fff #fff #d0ccbc"></div>
<div style="position:absolute;left:756.83px;top:657.59px;white-space:pre;font-family:'Liberation Sans',sans-serif;font-size:11px;line-height:13.20px;color:#c4c0b0;transform:scaleX(0.8550);transform-origin:0 0;">ABC</div>
<div style="position:absolute;left:780px;top:657px;width:27px;height:14px;border:1px solid;border-color:#d0ccbc #fff #fff #d0ccbc"></div>
<div style="position:absolute;left:783.57px;top:657.59px;white-space:pre;font-family:'Liberation Sans',sans-serif;font-size:11px;line-height:13.20px;color:#c4c0b0;transform:scaleX(0.8550);transform-origin:0 0;">RRP</div>
<div style="position:absolute;left:811px;top:657px;width:1px;height:14px;background:#9d9a8a"></div>
<div style="position:absolute;left:818.00px;top:657.59px;white-space:pre;font-family:'Liberation Sans',sans-serif;font-size:11px;line-height:13.20px;color:#111;transform:scaleX(0.8132);transform-origin:0 0;">LOG=OFF</div>
<svg style="left:882px;top:659px" width="13" height="12"><path d="M12 1 L1 11 M12 5 L5 11 M12 9 L9 11" stroke="#aca899" stroke-width="1"/></svg>
</body></html>
